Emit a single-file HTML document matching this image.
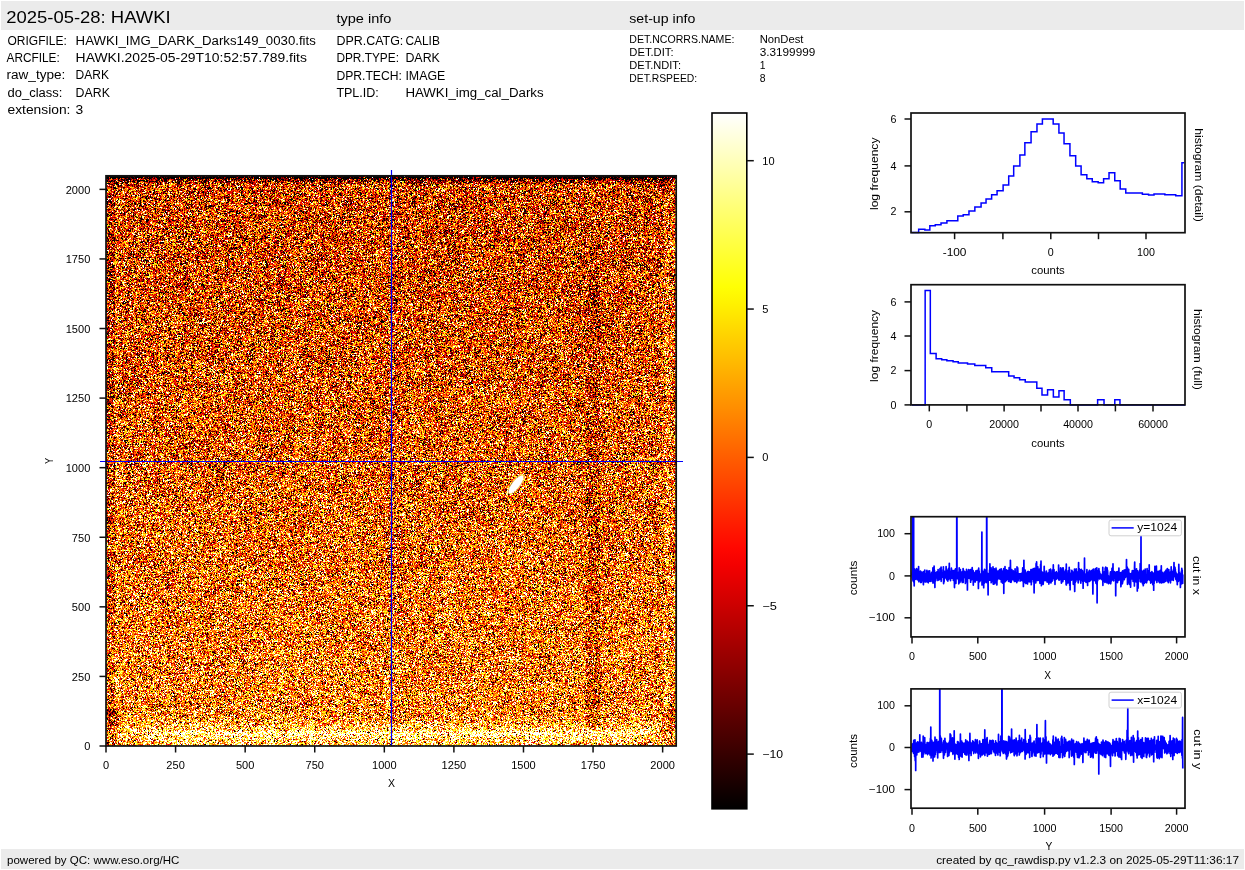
<!DOCTYPE html>
<html><head><meta charset="utf-8"><style>
html,body{margin:0;padding:0;background:#fff;width:1245px;height:870px;overflow:hidden}
#hm{position:absolute;left:106px;top:176px;width:570px;height:570px;background:#c76d29}
svg{position:absolute;left:0;top:0}
text{font-family:"Liberation Sans", sans-serif;fill:#000}
</style></head><body>
<canvas id="hm" width="570" height="570"></canvas>
<svg width="1245" height="870" viewBox="0 0 1245 870"><defs><linearGradient id="cb" x1="0" y1="0" x2="0" y2="1"><stop offset="0.000" stop-color="#ffffff"/><stop offset="0.025" stop-color="#ffffe6"/><stop offset="0.050" stop-color="#ffffcd"/><stop offset="0.075" stop-color="#ffffb4"/><stop offset="0.100" stop-color="#ffff9b"/><stop offset="0.125" stop-color="#ffff81"/><stop offset="0.150" stop-color="#ffff68"/><stop offset="0.175" stop-color="#ffff4f"/><stop offset="0.200" stop-color="#ffff36"/><stop offset="0.225" stop-color="#ffff1d"/><stop offset="0.250" stop-color="#ffff04"/><stop offset="0.275" stop-color="#fff100"/><stop offset="0.300" stop-color="#ffe000"/><stop offset="0.325" stop-color="#ffcf00"/><stop offset="0.350" stop-color="#ffbf00"/><stop offset="0.375" stop-color="#ffae00"/><stop offset="0.400" stop-color="#ff9d00"/><stop offset="0.425" stop-color="#ff8d00"/><stop offset="0.450" stop-color="#ff7c00"/><stop offset="0.475" stop-color="#ff6b00"/><stop offset="0.500" stop-color="#ff5a00"/><stop offset="0.525" stop-color="#ff4a00"/><stop offset="0.550" stop-color="#ff3900"/><stop offset="0.575" stop-color="#ff2800"/><stop offset="0.600" stop-color="#ff1700"/><stop offset="0.625" stop-color="#ff0700"/><stop offset="0.650" stop-color="#f40000"/><stop offset="0.675" stop-color="#e30000"/><stop offset="0.700" stop-color="#d20000"/><stop offset="0.725" stop-color="#c00000"/><stop offset="0.750" stop-color="#af0000"/><stop offset="0.775" stop-color="#9d0000"/><stop offset="0.800" stop-color="#8c0000"/><stop offset="0.825" stop-color="#7a0000"/><stop offset="0.850" stop-color="#690000"/><stop offset="0.875" stop-color="#570000"/><stop offset="0.900" stop-color="#460000"/><stop offset="0.925" stop-color="#340000"/><stop offset="0.950" stop-color="#230000"/><stop offset="0.975" stop-color="#110000"/><stop offset="1.000" stop-color="#000000"/></linearGradient><clipPath id="c1"><rect x="911" y="516.7" width="274" height="120.2"/></clipPath><clipPath id="c2"><rect x="911" y="688.9" width="274" height="119.3"/></clipPath></defs>
<rect x="1" y="1" width="1243" height="29" fill="#ebebeb"/>
<rect x="1" y="849" width="1243" height="20" fill="#ebebeb"/>
<text x="6.2" y="22.9" font-size="16.5" text-anchor="start" textLength="164.5" lengthAdjust="spacingAndGlyphs">2025-05-28: HAWKI</text>
<text x="336.4" y="23.3" font-size="12.3" text-anchor="start" textLength="55" lengthAdjust="spacingAndGlyphs">type info</text>
<text x="629.3" y="22.7" font-size="12.3" text-anchor="start" textLength="66" lengthAdjust="spacingAndGlyphs">set-up info</text>
<text x="7.5" y="45" font-size="12.3" text-anchor="start" textLength="59.3" lengthAdjust="spacingAndGlyphs">ORIGFILE:</text>
<text x="75.6" y="45" font-size="12.3" text-anchor="start" textLength="240.2" lengthAdjust="spacingAndGlyphs">HAWKI_IMG_DARK_Darks149_0030.fits</text>
<text x="6.5" y="62.1" font-size="12.3" text-anchor="start" textLength="53.3" lengthAdjust="spacingAndGlyphs">ARCFILE:</text>
<text x="75.6" y="62.1" font-size="12.3" text-anchor="start" textLength="231.3" lengthAdjust="spacingAndGlyphs">HAWKI.2025-05-29T10:52:57.789.fits</text>
<text x="6.5" y="79.4" font-size="12.3" text-anchor="start" textLength="58.8" lengthAdjust="spacingAndGlyphs">raw_type:</text>
<text x="75.6" y="79.4" font-size="12.3" text-anchor="start" textLength="33.4" lengthAdjust="spacingAndGlyphs">DARK</text>
<text x="7.5" y="97.0" font-size="12.3" text-anchor="start" textLength="54.8" lengthAdjust="spacingAndGlyphs">do_class:</text>
<text x="75.6" y="97.0" font-size="12.3" text-anchor="start" textLength="34.3" lengthAdjust="spacingAndGlyphs">DARK</text>
<text x="7.5" y="113.9" font-size="12.3" text-anchor="start" textLength="62.9" lengthAdjust="spacingAndGlyphs">extension:</text>
<text x="75.6" y="113.9" font-size="12.3" text-anchor="start" textLength="7.7" lengthAdjust="spacingAndGlyphs">3</text>
<text x="336.4" y="44.9" font-size="12.3" text-anchor="start" textLength="66.9" lengthAdjust="spacingAndGlyphs">DPR.CATG:</text>
<text x="405.4" y="44.9" font-size="12.3" text-anchor="start" textLength="34.5" lengthAdjust="spacingAndGlyphs">CALIB</text>
<text x="336.4" y="61.9" font-size="12.3" text-anchor="start" textLength="62.6" lengthAdjust="spacingAndGlyphs">DPR.TYPE:</text>
<text x="405.4" y="61.9" font-size="12.3" text-anchor="start" textLength="34.5" lengthAdjust="spacingAndGlyphs">DARK</text>
<text x="336.4" y="79.6" font-size="12.3" text-anchor="start" textLength="65.5" lengthAdjust="spacingAndGlyphs">DPR.TECH:</text>
<text x="405.4" y="79.6" font-size="12.3" text-anchor="start" textLength="39.9" lengthAdjust="spacingAndGlyphs">IMAGE</text>
<text x="336.4" y="96.6" font-size="12.3" text-anchor="start" textLength="42.4" lengthAdjust="spacingAndGlyphs">TPL.ID:</text>
<text x="405.4" y="96.6" font-size="12.3" text-anchor="start" textLength="138.2" lengthAdjust="spacingAndGlyphs">HAWKI_img_cal_Darks</text>
<text x="629.3" y="43.0" font-size="10.4" text-anchor="start" textLength="105.1" lengthAdjust="spacingAndGlyphs">DET.NCORRS.NAME:</text>
<text x="759.7" y="43.0" font-size="10.4" text-anchor="start" textLength="43.8" lengthAdjust="spacingAndGlyphs">NonDest</text>
<text x="629.3" y="55.6" font-size="10.4" text-anchor="start" textLength="44.3" lengthAdjust="spacingAndGlyphs">DET.DIT:</text>
<text x="759.7" y="55.6" font-size="10.4" text-anchor="start" textLength="55.6" lengthAdjust="spacingAndGlyphs">3.3199999</text>
<text x="629.3" y="68.75" font-size="10.4" text-anchor="start" textLength="51.7" lengthAdjust="spacingAndGlyphs">DET.NDIT:</text>
<text x="759.7" y="68.75" font-size="10.4" text-anchor="start">1</text>
<text x="629.3" y="81.7" font-size="10.4" text-anchor="start" textLength="67.9" lengthAdjust="spacingAndGlyphs">DET.RSPEED:</text>
<text x="759.7" y="81.7" font-size="10.4" text-anchor="start">8</text>
<text x="7" y="864" font-size="11" text-anchor="start" textLength="172.4" lengthAdjust="spacingAndGlyphs">powered by QC: www.eso.org/HC</text>
<text x="1239" y="864" font-size="11" text-anchor="end" textLength="302.8" lengthAdjust="spacingAndGlyphs">created by qc_rawdisp.py v1.2.3 on 2025-05-29T11:36:17</text>
<line x1="106.0" y1="746" x2="106.0" y2="752.5" stroke="#111" stroke-width="1.5"/>
<text x="106.0" y="768.9" font-size="10.5" text-anchor="middle" textLength="6.15" lengthAdjust="spacingAndGlyphs">0</text>
<line x1="99.5" y1="746.0" x2="106" y2="746.0" stroke="#111" stroke-width="1.5"/>
<text x="90.3" y="750.3" font-size="10.5" text-anchor="end" textLength="6.15" lengthAdjust="spacingAndGlyphs">0</text>
<line x1="175.58" y1="746" x2="175.58" y2="752.5" stroke="#111" stroke-width="1.5"/>
<text x="175.58" y="768.9" font-size="10.5" text-anchor="middle" textLength="18.45" lengthAdjust="spacingAndGlyphs">250</text>
<line x1="99.5" y1="676.42" x2="106" y2="676.42" stroke="#111" stroke-width="1.5"/>
<text x="90.3" y="680.72" font-size="10.5" text-anchor="end" textLength="18.45" lengthAdjust="spacingAndGlyphs">250</text>
<line x1="245.16" y1="746" x2="245.16" y2="752.5" stroke="#111" stroke-width="1.5"/>
<text x="245.16" y="768.9" font-size="10.5" text-anchor="middle" textLength="18.45" lengthAdjust="spacingAndGlyphs">500</text>
<line x1="99.5" y1="606.84" x2="106" y2="606.84" stroke="#111" stroke-width="1.5"/>
<text x="90.3" y="611.14" font-size="10.5" text-anchor="end" textLength="18.45" lengthAdjust="spacingAndGlyphs">500</text>
<line x1="314.74" y1="746" x2="314.74" y2="752.5" stroke="#111" stroke-width="1.5"/>
<text x="314.74" y="768.9" font-size="10.5" text-anchor="middle" textLength="18.45" lengthAdjust="spacingAndGlyphs">750</text>
<line x1="99.5" y1="537.26" x2="106" y2="537.26" stroke="#111" stroke-width="1.5"/>
<text x="90.3" y="541.56" font-size="10.5" text-anchor="end" textLength="18.45" lengthAdjust="spacingAndGlyphs">750</text>
<line x1="384.32" y1="746" x2="384.32" y2="752.5" stroke="#111" stroke-width="1.5"/>
<text x="384.32" y="768.9" font-size="10.5" text-anchor="middle" textLength="24.6" lengthAdjust="spacingAndGlyphs">1000</text>
<line x1="99.5" y1="467.68" x2="106" y2="467.68" stroke="#111" stroke-width="1.5"/>
<text x="90.3" y="471.98" font-size="10.5" text-anchor="end" textLength="24.6" lengthAdjust="spacingAndGlyphs">1000</text>
<line x1="453.9" y1="746" x2="453.9" y2="752.5" stroke="#111" stroke-width="1.5"/>
<text x="453.9" y="768.9" font-size="10.5" text-anchor="middle" textLength="24.6" lengthAdjust="spacingAndGlyphs">1250</text>
<line x1="99.5" y1="398.1" x2="106" y2="398.1" stroke="#111" stroke-width="1.5"/>
<text x="90.3" y="402.4" font-size="10.5" text-anchor="end" textLength="24.6" lengthAdjust="spacingAndGlyphs">1250</text>
<line x1="523.48" y1="746" x2="523.48" y2="752.5" stroke="#111" stroke-width="1.5"/>
<text x="523.48" y="768.9" font-size="10.5" text-anchor="middle" textLength="24.6" lengthAdjust="spacingAndGlyphs">1500</text>
<line x1="99.5" y1="328.52" x2="106" y2="328.52" stroke="#111" stroke-width="1.5"/>
<text x="90.3" y="332.82" font-size="10.5" text-anchor="end" textLength="24.6" lengthAdjust="spacingAndGlyphs">1500</text>
<line x1="593.06" y1="746" x2="593.06" y2="752.5" stroke="#111" stroke-width="1.5"/>
<text x="593.06" y="768.9" font-size="10.5" text-anchor="middle" textLength="24.6" lengthAdjust="spacingAndGlyphs">1750</text>
<line x1="99.5" y1="258.94" x2="106" y2="258.94" stroke="#111" stroke-width="1.5"/>
<text x="90.3" y="263.24" font-size="10.5" text-anchor="end" textLength="24.6" lengthAdjust="spacingAndGlyphs">1750</text>
<line x1="662.64" y1="746" x2="662.64" y2="752.5" stroke="#111" stroke-width="1.5"/>
<text x="662.64" y="768.9" font-size="10.5" text-anchor="middle" textLength="24.6" lengthAdjust="spacingAndGlyphs">2000</text>
<line x1="99.5" y1="189.36" x2="106" y2="189.36" stroke="#111" stroke-width="1.5"/>
<text x="90.3" y="193.66" font-size="10.5" text-anchor="end" textLength="24.6" lengthAdjust="spacingAndGlyphs">2000</text>
<text x="391.5" y="786.8" font-size="10.5" text-anchor="middle">X</text>
<text transform="translate(53,461) rotate(-90)" font-size="10.5" text-anchor="middle" textLength="6.2" lengthAdjust="spacingAndGlyphs">Y</text>
<line x1="391.5" y1="170" x2="391.5" y2="746" stroke="#0000ff" stroke-width="1.2"/>
<line x1="100" y1="461.5" x2="683" y2="461.5" stroke="#0000ff" stroke-width="1.2"/>
<rect x="106" y="175.8" width="570.2" height="570.2" fill="none" stroke="#111" stroke-width="1.7"/>
<rect x="712" y="113" width="34.8" height="695.8" fill="url(#cb)" stroke="#000" stroke-width="1.6"/>
<line x1="746.8" y1="160.7" x2="753.8" y2="160.7" stroke="#111" stroke-width="1.5"/>
<text x="762.3" y="164.5" font-size="10.5" text-anchor="start" textLength="12.3" lengthAdjust="spacingAndGlyphs">10</text>
<line x1="746.8" y1="309.05" x2="753.8" y2="309.05" stroke="#111" stroke-width="1.5"/>
<text x="762.3" y="312.85" font-size="10.5" text-anchor="start" textLength="6.15" lengthAdjust="spacingAndGlyphs">5</text>
<line x1="746.8" y1="457.4" x2="753.8" y2="457.4" stroke="#111" stroke-width="1.5"/>
<text x="762.3" y="461.2" font-size="10.5" text-anchor="start" textLength="6.15" lengthAdjust="spacingAndGlyphs">0</text>
<line x1="746.8" y1="605.75" x2="753.8" y2="605.75" stroke="#111" stroke-width="1.5"/>
<text x="762.3" y="609.55" font-size="10.5" text-anchor="start" textLength="14.6" lengthAdjust="spacingAndGlyphs">−5</text>
<line x1="746.8" y1="754.1" x2="753.8" y2="754.1" stroke="#111" stroke-width="1.5"/>
<text x="762.3" y="757.9" font-size="10.5" text-anchor="start" textLength="20.75" lengthAdjust="spacingAndGlyphs">−10</text>
<polyline points="911.21,232.62 918.66,232.62 918.66,229.2 924.87,229.2 924.87,229.98 929.84,229.98 929.84,225.79 935.27,225.79 935.27,224.86 941.02,224.86 941.02,222.99 946.92,222.99 946.92,220.67 957.79,220.67 957.79,216.01 963.22,216.01 963.22,214.77 968.97,214.77 968.97,211.04 974.86,211.04 974.86,207.0 981.08,207.0 981.08,203.12 986.04,203.12 986.04,198.93 991.63,198.93 991.63,194.74 997.07,194.74 997.07,190.7 1003.12,190.7 1003.12,184.96 1008.71,184.96 1008.71,175.95 1013.68,175.95 1013.68,166.02 1019.89,166.02 1019.89,154.99 1024.86,154.99 1024.86,142.73 1031.07,142.73 1031.07,131.86 1036.97,131.86 1036.97,123.94 1042.4,123.94 1042.4,118.97 1053.18,118.96 1053.18,123.92 1058.92,123.92 1058.92,132.92 1064.04,132.92 1064.04,143.78 1069.94,143.78 1069.94,155.72 1075.68,155.72 1075.68,165.96 1081.1,165.96 1081.1,174.8 1086.84,174.8 1086.84,178.68 1092.27,178.68 1092.27,181.78 1098.17,181.78 1098.17,182.87 1103.6,182.87 1103.6,178.68 1109.02,178.68 1109.02,172.78 1114.76,172.78 1114.76,180.69 1120.19,180.69 1120.19,189.07 1125.78,189.07 1125.78,192.95 1142.37,192.95 1142.37,194.19 1148.58,194.19 1148.58,194.96 1154.01,194.96 1154.01,193.88 1164.86,193.88 1164.86,194.65 1175.72,194.65 1175.72,195.74 1181.93,195.74 1181.93,162.7 1184.25,162.7" fill="none" stroke="#0000ff" stroke-width="1.5" stroke-linejoin="miter"/>
<rect x="911" y="113" width="274" height="119.7" fill="none" stroke="#111" stroke-width="1.7"/>
<line x1="904.5" y1="119" x2="911" y2="119" stroke="#111" stroke-width="1.5"/>
<text x="896.5" y="122.6" font-size="10.2" text-anchor="end" textLength="5.95" lengthAdjust="spacingAndGlyphs">6</text>
<line x1="904.5" y1="165.9" x2="911" y2="165.9" stroke="#111" stroke-width="1.5"/>
<text x="896.5" y="169.5" font-size="10.2" text-anchor="end" textLength="5.95" lengthAdjust="spacingAndGlyphs">4</text>
<line x1="904.5" y1="211.8" x2="911" y2="211.8" stroke="#111" stroke-width="1.5"/>
<text x="896.5" y="215.4" font-size="10.2" text-anchor="end" textLength="5.95" lengthAdjust="spacingAndGlyphs">2</text>
<line x1="954.6" y1="232.7" x2="954.6" y2="239.2" stroke="#111" stroke-width="1.5"/>
<text x="954.6" y="255.6" font-size="10.2" text-anchor="middle" textLength="23.8" lengthAdjust="spacingAndGlyphs">-100</text>
<line x1="1002.9" y1="232.7" x2="1002.9" y2="239.2" stroke="#111" stroke-width="1.5"/>
<line x1="1050.8" y1="232.7" x2="1050.8" y2="239.2" stroke="#111" stroke-width="1.5"/>
<text x="1050.8" y="255.6" font-size="10.2" text-anchor="middle" textLength="5.95" lengthAdjust="spacingAndGlyphs">0</text>
<line x1="1098.5" y1="232.7" x2="1098.5" y2="239.2" stroke="#111" stroke-width="1.5"/>
<line x1="1146" y1="232.7" x2="1146" y2="239.2" stroke="#111" stroke-width="1.5"/>
<text x="1146" y="255.6" font-size="10.2" text-anchor="middle" textLength="17.85" lengthAdjust="spacingAndGlyphs">100</text>
<text x="1048" y="274.2" font-size="10.2" text-anchor="middle" textLength="33.5" lengthAdjust="spacingAndGlyphs">counts</text>
<text transform="translate(877.5,173.8) rotate(-90)" font-size="10.2" text-anchor="middle" textLength="72.5" lengthAdjust="spacingAndGlyphs">log frequency</text>
<text transform="translate(1194.6,175) rotate(90)" font-size="10.2" text-anchor="middle" textLength="93.5" lengthAdjust="spacingAndGlyphs">histogram (detail)</text>
<polyline points="911.71,404.89 925.15,404.89 925.15,290.51 930.32,290.51 930.32,353.59 936.11,353.59 936.11,358.76 941.7,358.76 941.7,359.8 946.87,359.8 946.87,360.83 953.07,360.83 953.07,361.87 958.24,361.87 958.24,362.9 967.55,362.9 967.55,363.93 974.79,363.93 974.79,365.59 985.75,365.59 985.75,367.66 991.75,367.66 991.75,371.79 1008.69,371.79 1008.69,375.93 1014.06,375.93 1014.06,377.79 1019.65,377.79 1019.65,379.86 1025.23,379.86 1025.23,381.93 1036.81,381.93 1036.81,388.13 1041.99,388.13 1041.99,394.96 1047.57,394.96 1047.57,389.79 1053.36,389.79 1053.36,397.03 1058.95,397.03 1058.95,390.82 1064.12,390.82 1064.12,399.72 1070.32,399.72 1070.32,404.89 1097.62,404.89 1097.62,399.72 1104.03,399.72 1104.03,404.89 1114.79,404.89 1114.79,399.72 1119.96,399.72 1119.96,404.89 1185.11,404.89" fill="none" stroke="#0000ff" stroke-width="1.5"/>
<rect x="911" y="284.7" width="274" height="120.2" fill="none" stroke="#111" stroke-width="1.7"/>
<line x1="904.5" y1="301.9" x2="911" y2="301.9" stroke="#111" stroke-width="1.5"/>
<text x="896.5" y="305.5" font-size="10.2" text-anchor="end" textLength="5.95" lengthAdjust="spacingAndGlyphs">6</text>
<line x1="904.5" y1="336" x2="911" y2="336" stroke="#111" stroke-width="1.5"/>
<text x="896.5" y="339.6" font-size="10.2" text-anchor="end" textLength="5.95" lengthAdjust="spacingAndGlyphs">4</text>
<line x1="904.5" y1="370.6" x2="911" y2="370.6" stroke="#111" stroke-width="1.5"/>
<text x="896.5" y="374.2" font-size="10.2" text-anchor="end" textLength="5.95" lengthAdjust="spacingAndGlyphs">2</text>
<line x1="904.5" y1="404.9" x2="911" y2="404.9" stroke="#111" stroke-width="1.5"/>
<text x="896.5" y="408.5" font-size="10.2" text-anchor="end" textLength="5.95" lengthAdjust="spacingAndGlyphs">0</text>
<line x1="929.3" y1="404.9" x2="929.3" y2="411.4" stroke="#111" stroke-width="1.5"/>
<text x="929.3" y="428" font-size="10.2" text-anchor="middle" textLength="5.95" lengthAdjust="spacingAndGlyphs">0</text>
<line x1="966.9" y1="404.9" x2="966.9" y2="411.4" stroke="#111" stroke-width="1.5"/>
<line x1="1004.1" y1="404.9" x2="1004.1" y2="411.4" stroke="#111" stroke-width="1.5"/>
<text x="1004.1" y="428" font-size="10.2" text-anchor="middle" textLength="29.75" lengthAdjust="spacingAndGlyphs">20000</text>
<line x1="1041" y1="404.9" x2="1041" y2="411.4" stroke="#111" stroke-width="1.5"/>
<line x1="1078" y1="404.9" x2="1078" y2="411.4" stroke="#111" stroke-width="1.5"/>
<text x="1078" y="428" font-size="10.2" text-anchor="middle" textLength="29.75" lengthAdjust="spacingAndGlyphs">40000</text>
<line x1="1115.4" y1="404.9" x2="1115.4" y2="411.4" stroke="#111" stroke-width="1.5"/>
<line x1="1153" y1="404.9" x2="1153" y2="411.4" stroke="#111" stroke-width="1.5"/>
<text x="1153" y="428" font-size="10.2" text-anchor="middle" textLength="29.75" lengthAdjust="spacingAndGlyphs">60000</text>
<text x="1048" y="446.7" font-size="10.2" text-anchor="middle" textLength="33.5" lengthAdjust="spacingAndGlyphs">counts</text>
<text transform="translate(877.5,345.9) rotate(-90)" font-size="10.2" text-anchor="middle" textLength="72" lengthAdjust="spacingAndGlyphs">log frequency</text>
<text transform="translate(1194.3,349.4) rotate(90)" font-size="10.2" text-anchor="middle" textLength="81" lengthAdjust="spacingAndGlyphs">histogram (full)</text>
<polyline clip-path="url(#c1)" points="912.0,574.6 912.1,575.2 912.3,571.9 912.4,577.7 912.5,572.2 912.7,407.5 912.8,580.0 912.9,573.4 913.1,571.4 913.2,573.0 913.3,581.2 913.5,578.0 913.6,407.5 913.7,575.0 913.9,575.0 914.0,582.7 914.1,572.7 914.2,585.8 914.4,570.5 914.5,575.4 914.6,569.0 914.8,572.3 914.9,577.5 915.0,574.5 915.2,571.3 915.3,574.1 915.4,576.4 915.6,576.8 915.7,579.3 915.8,575.2 916.0,578.3 916.1,574.2 916.2,569.9 916.4,572.5 916.5,578.9 916.6,568.5 916.8,572.9 916.9,576.2 917.0,578.7 917.2,574.5 917.3,569.3 917.4,579.7 917.6,569.7 917.7,570.3 917.8,577.2 918.0,574.5 918.1,574.8 918.2,571.7 918.4,569.4 918.5,580.4 918.6,566.5 918.7,574.9 918.9,581.8 919.0,574.1 919.1,576.3 919.3,577.8 919.4,579.5 919.5,573.2 919.7,572.8 919.8,579.8 919.9,571.3 920.1,571.5 920.2,576.5 920.3,575.3 920.5,571.1 920.6,575.4 920.7,582.4 920.9,573.0 921.0,575.5 921.1,578.3 921.3,578.8 921.4,582.3 921.5,573.2 921.7,576.8 921.8,572.1 921.9,573.2 922.1,579.0 922.2,580.7 922.3,578.9 922.5,576.6 922.6,576.6 922.7,577.3 922.8,575.6 923.0,574.6 923.1,574.8 923.2,574.0 923.4,584.7 923.5,571.6 923.6,575.3 923.8,572.8 923.9,579.9 924.0,579.4 924.2,576.5 924.3,577.6 924.4,581.6 924.6,579.2 924.7,577.3 924.8,570.0 925.0,580.6 925.1,581.9 925.2,577.4 925.4,579.7 925.5,573.6 925.6,579.1 925.8,574.9 925.9,575.2 926.0,581.8 926.2,579.2 926.3,574.5 926.4,579.1 926.6,579.0 926.7,579.1 926.8,571.5 926.9,570.4 927.1,578.8 927.2,581.9 927.3,577.3 927.5,581.0 927.6,577.7 927.7,571.7 927.9,572.3 928.0,573.9 928.1,576.3 928.3,582.8 928.4,577.7 928.5,571.2 928.7,572.8 928.8,578.9 928.9,574.4 929.1,575.6 929.2,577.4 929.3,581.1 929.5,581.2 929.6,570.8 929.7,578.7 929.9,578.0 930.0,578.0 930.1,579.6 930.3,580.1 930.4,573.8 930.5,576.2 930.7,581.5 930.8,576.6 930.9,578.7 931.1,575.7 931.2,577.0 931.3,574.1 931.4,576.7 931.6,572.4 931.7,579.3 931.8,576.5 932.0,575.4 932.1,572.1 932.2,574.5 932.4,576.0 932.5,581.5 932.6,578.8 932.8,576.5 932.9,567.9 933.0,583.1 933.2,580.8 933.3,582.4 933.4,577.5 933.6,575.9 933.7,580.2 933.8,577.9 934.0,580.2 934.1,566.0 934.2,582.5 934.4,575.5 934.5,570.4 934.6,573.8 934.8,580.4 934.9,587.4 935.0,575.7 935.2,576.2 935.3,574.0 935.4,581.2 935.5,577.5 935.7,578.3 935.8,580.3 935.9,579.3 936.1,572.7 936.2,577.4 936.3,576.5 936.5,578.0 936.6,576.2 936.7,577.9 936.9,576.3 937.0,571.8 937.1,574.1 937.3,572.3 937.4,574.5 937.5,572.3 937.7,575.4 937.8,573.4 937.9,580.4 938.1,569.5 938.2,578.3 938.3,572.7 938.5,574.5 938.6,579.9 938.7,576.5 938.9,577.3 939.0,578.3 939.1,578.7 939.3,573.4 939.4,579.7 939.5,577.8 939.7,578.9 939.8,577.3 939.9,571.5 940.0,568.7 940.2,570.7 940.3,576.2 940.4,572.7 940.6,572.2 940.7,576.1 940.8,578.9 941.0,570.6 941.1,567.0 941.2,581.3 941.4,576.5 941.5,572.6 941.6,577.4 941.8,576.8 941.9,573.5 942.0,577.2 942.2,576.3 942.3,575.7 942.4,576.2 942.6,573.1 942.7,574.2 942.8,575.9 943.0,569.9 943.1,572.2 943.2,575.9 943.4,566.8 943.5,575.2 943.6,583.6 943.8,580.4 943.9,582.1 944.0,576.6 944.1,581.9 944.3,574.3 944.4,575.4 944.5,571.4 944.7,575.4 944.8,571.5 944.9,573.9 945.1,576.4 945.2,574.7 945.3,577.4 945.5,575.7 945.6,577.0 945.7,578.0 945.9,572.1 946.0,571.0 946.1,566.5 946.3,578.6 946.4,576.9 946.5,574.8 946.7,579.5 946.8,576.5 946.9,576.1 947.1,580.1 947.2,575.2 947.3,574.6 947.5,570.7 947.6,575.6 947.7,579.0 947.9,581.1 948.0,573.9 948.1,569.0 948.3,579.4 948.4,573.3 948.5,572.2 948.6,575.8 948.8,572.2 948.9,568.1 949.0,571.5 949.2,574.8 949.3,563.3 949.4,573.6 949.6,578.3 949.7,576.8 949.8,574.9 950.0,579.1 950.1,575.1 950.2,572.9 950.4,577.3 950.5,580.7 950.6,572.4 950.8,572.0 950.9,571.2 951.0,578.6 951.2,577.5 951.3,571.1 951.4,568.2 951.6,575.5 951.7,578.0 951.8,578.1 952.0,572.4 952.1,574.1 952.2,577.9 952.4,577.6 952.5,576.9 952.6,570.6 952.7,573.2 952.9,576.7 953.0,578.4 953.1,573.6 953.3,580.3 953.4,576.4 953.5,573.3 953.7,574.2 953.8,575.4 953.9,573.7 954.1,573.1 954.2,570.3 954.3,578.4 954.5,587.6 954.6,571.6 954.7,572.5 954.9,576.2 955.0,572.8 955.1,571.0 955.3,580.5 955.4,575.6 955.5,568.8 955.7,579.5 955.8,572.2 955.9,583.5 956.1,570.2 956.2,576.5 956.3,577.8 956.5,573.0 956.6,576.8 956.7,578.6 956.8,407.5 957.0,567.4 957.1,573.3 957.2,574.9 957.4,574.4 957.5,572.5 957.6,573.0 957.8,576.4 957.9,574.2 958.0,577.8 958.2,577.7 958.3,579.7 958.4,572.5 958.6,577.0 958.7,572.2 958.8,583.8 959.0,577.2 959.1,574.8 959.2,567.9 959.4,577.4 959.5,576.9 959.6,572.2 959.8,573.1 959.9,581.2 960.0,582.3 960.2,572.4 960.3,578.3 960.4,569.6 960.6,580.5 960.7,575.6 960.8,576.8 961.0,576.1 961.1,577.4 961.2,573.8 961.3,577.1 961.5,577.2 961.6,581.0 961.7,575.9 961.9,577.1 962.0,578.1 962.1,571.8 962.3,582.4 962.4,575.7 962.5,575.9 962.7,580.8 962.8,580.7 962.9,578.7 963.1,568.5 963.2,582.3 963.3,569.6 963.5,571.1 963.6,570.9 963.7,578.0 963.9,570.9 964.0,577.1 964.1,573.9 964.3,574.6 964.4,575.9 964.5,576.8 964.7,577.0 964.8,571.9 964.9,572.7 965.1,578.1 965.2,576.4 965.3,576.9 965.4,583.4 965.6,572.0 965.7,571.8 965.8,579.0 966.0,580.1 966.1,576.6 966.2,573.8 966.4,578.3 966.5,569.4 966.6,574.1 966.8,576.3 966.9,572.8 967.0,581.9 967.2,575.4 967.3,571.7 967.4,590.0 967.6,571.7 967.7,577.3 967.8,575.2 968.0,574.0 968.1,575.7 968.2,573.1 968.4,578.1 968.5,577.2 968.6,569.5 968.8,570.6 968.9,572.2 969.0,575.3 969.2,578.5 969.3,570.4 969.4,570.1 969.6,577.7 969.7,576.8 969.8,574.8 969.9,571.8 970.1,572.4 970.2,570.7 970.3,573.6 970.5,571.4 970.6,582.2 970.7,569.5 970.9,575.5 971.0,580.8 971.1,578.2 971.3,573.9 971.4,572.0 971.5,569.4 971.7,578.4 971.8,576.8 971.9,572.2 972.1,572.0 972.2,567.6 972.3,573.0 972.5,575.4 972.6,573.9 972.7,579.6 972.9,578.6 973.0,572.9 973.1,570.5 973.3,585.1 973.4,571.6 973.5,577.5 973.7,580.8 973.8,572.7 973.9,576.3 974.0,575.4 974.2,573.3 974.3,575.8 974.4,577.0 974.6,576.5 974.7,579.1 974.8,573.2 975.0,582.1 975.1,573.5 975.2,582.1 975.4,572.4 975.5,575.7 975.6,579.7 975.8,579.7 975.9,570.9 976.0,574.3 976.2,575.2 976.3,576.0 976.4,575.0 976.6,573.6 976.7,578.5 976.8,580.3 977.0,572.4 977.1,578.1 977.2,570.4 977.4,575.8 977.5,575.2 977.6,578.0 977.8,575.6 977.9,575.5 978.0,574.5 978.1,574.9 978.3,579.4 978.4,588.5 978.5,578.4 978.7,568.2 978.8,573.4 978.9,574.3 979.1,573.4 979.2,571.2 979.3,578.5 979.5,574.9 979.6,574.3 979.7,575.0 979.9,581.6 980.0,576.0 980.1,576.1 980.3,580.4 980.4,579.0 980.5,574.0 980.7,579.9 980.8,576.8 980.9,575.9 981.1,573.6 981.2,576.8 981.3,579.1 981.5,579.2 981.6,569.6 981.7,577.2 981.9,532.1 982.0,584.9 982.1,573.4 982.3,572.2 982.4,578.6 982.5,581.2 982.6,576.6 982.8,581.3 982.9,579.9 983.0,571.3 983.2,576.5 983.3,574.9 983.4,577.4 983.6,576.6 983.7,587.7 983.8,577.7 984.0,576.2 984.1,583.7 984.2,580.8 984.4,573.2 984.5,569.4 984.6,578.1 984.8,571.1 984.9,578.8 985.0,569.8 985.2,581.3 985.3,578.6 985.4,575.9 985.6,581.7 985.7,572.9 985.8,581.9 986.0,576.6 986.1,580.5 986.2,582.7 986.4,578.3 986.5,577.1 986.6,577.8 986.7,407.5 986.9,577.8 987.0,578.4 987.1,577.8 987.3,578.9 987.4,579.8 987.5,573.0 987.7,575.8 987.8,573.9 987.9,578.0 988.1,594.8 988.2,577.5 988.3,576.9 988.5,577.6 988.6,575.7 988.7,573.5 988.9,579.6 989.0,579.7 989.1,574.4 989.3,580.0 989.4,580.1 989.5,570.2 989.7,578.2 989.8,577.8 989.9,563.8 990.1,573.0 990.2,574.3 990.3,580.2 990.5,573.0 990.6,573.3 990.7,573.6 990.9,580.0 991.0,573.4 991.1,567.9 991.2,582.7 991.4,575.0 991.5,576.0 991.6,571.4 991.8,576.6 991.9,576.1 992.0,570.5 992.2,579.6 992.3,569.9 992.4,571.1 992.6,581.4 992.7,576.3 992.8,573.2 993.0,566.9 993.1,573.8 993.2,584.0 993.4,576.1 993.5,578.0 993.6,568.9 993.8,584.2 993.9,577.9 994.0,578.5 994.2,578.3 994.3,568.8 994.4,580.3 994.6,575.3 994.7,577.3 994.8,582.8 995.0,583.6 995.1,579.3 995.2,577.4 995.3,577.4 995.5,575.5 995.6,575.6 995.7,582.2 995.9,576.7 996.0,568.2 996.1,578.2 996.3,576.0 996.4,570.1 996.5,574.3 996.7,577.6 996.8,574.7 996.9,584.9 997.1,571.9 997.2,578.6 997.3,574.2 997.5,576.4 997.6,579.8 997.7,573.7 997.9,576.2 998.0,571.0 998.1,576.5 998.3,574.7 998.4,571.0 998.5,574.9 998.7,576.9 998.8,570.8 998.9,573.3 999.1,577.8 999.2,578.7 999.3,577.8 999.5,570.5 999.6,569.5 999.7,574.3 999.8,571.6 1000.0,579.2 1000.1,578.0 1000.2,569.5 1000.4,571.6 1000.5,579.2 1000.6,569.9 1000.8,570.6 1000.9,574.5 1001.0,571.2 1001.2,568.8 1001.3,582.0 1001.4,577.6 1001.6,571.0 1001.7,576.2 1001.8,573.6 1002.0,572.5 1002.1,576.2 1002.2,581.4 1002.4,577.5 1002.5,583.1 1002.6,574.7 1002.8,571.0 1002.9,575.1 1003.0,577.6 1003.2,573.8 1003.3,570.1 1003.4,572.1 1003.6,576.5 1003.7,568.7 1003.8,593.3 1003.9,578.9 1004.1,577.7 1004.2,574.3 1004.3,578.6 1004.5,579.8 1004.6,580.8 1004.7,577.9 1004.9,579.0 1005.0,566.7 1005.1,581.8 1005.3,575.7 1005.4,579.5 1005.5,573.6 1005.7,575.6 1005.8,571.5 1005.9,581.0 1006.1,576.0 1006.2,573.3 1006.3,579.2 1006.5,569.8 1006.6,580.2 1006.7,578.2 1006.9,574.7 1007.0,576.5 1007.1,577.7 1007.3,576.5 1007.4,574.4 1007.5,577.2 1007.7,579.1 1007.8,570.6 1007.9,575.3 1008.0,578.5 1008.2,572.2 1008.3,574.3 1008.4,575.2 1008.6,581.4 1008.7,576.0 1008.8,577.3 1009.0,574.7 1009.1,567.7 1009.2,574.4 1009.4,573.9 1009.5,579.7 1009.6,572.5 1009.8,574.3 1009.9,574.3 1010.0,573.3 1010.2,573.0 1010.3,582.1 1010.4,560.3 1010.6,573.4 1010.7,572.3 1010.8,578.7 1011.0,573.5 1011.1,582.3 1011.2,573.3 1011.4,570.0 1011.5,574.2 1011.6,580.8 1011.8,569.6 1011.9,579.8 1012.0,576.5 1012.2,579.0 1012.3,577.4 1012.4,579.3 1012.5,579.2 1012.7,575.0 1012.8,574.0 1012.9,572.6 1013.1,576.2 1013.2,570.8 1013.3,570.9 1013.5,579.7 1013.6,579.8 1013.7,575.6 1013.9,578.8 1014.0,575.8 1014.1,576.3 1014.3,572.2 1014.4,581.5 1014.5,578.0 1014.7,578.8 1014.8,575.4 1014.9,575.9 1015.1,568.8 1015.2,576.7 1015.3,581.3 1015.5,577.8 1015.6,572.9 1015.7,574.8 1015.9,580.5 1016.0,577.6 1016.1,576.9 1016.3,577.7 1016.4,581.4 1016.5,576.8 1016.6,572.5 1016.8,582.7 1016.9,577.0 1017.0,566.9 1017.2,574.3 1017.3,576.5 1017.4,575.4 1017.6,578.5 1017.7,567.8 1017.8,570.3 1018.0,574.9 1018.1,580.9 1018.2,579.0 1018.4,578.3 1018.5,576.9 1018.6,575.0 1018.8,577.3 1018.9,573.9 1019.0,574.5 1019.2,573.9 1019.3,578.2 1019.4,577.9 1019.6,576.2 1019.7,577.4 1019.8,577.2 1020.0,579.5 1020.1,581.1 1020.2,575.6 1020.4,573.8 1020.5,577.5 1020.6,580.6 1020.8,580.6 1020.9,576.9 1021.0,575.2 1021.1,574.6 1021.3,577.8 1021.4,573.4 1021.5,580.5 1021.7,576.7 1021.8,579.7 1021.9,573.6 1022.1,576.9 1022.2,579.8 1022.3,578.7 1022.5,575.4 1022.6,573.0 1022.7,567.8 1022.9,580.9 1023.0,578.0 1023.1,579.2 1023.3,577.7 1023.4,586.5 1023.5,576.5 1023.7,576.0 1023.8,575.7 1023.9,560.3 1024.1,579.9 1024.2,573.3 1024.3,582.7 1024.5,570.6 1024.6,579.8 1024.7,580.0 1024.9,577.6 1025.0,577.5 1025.1,582.5 1025.2,570.2 1025.4,572.7 1025.5,579.2 1025.6,578.0 1025.8,575.4 1025.9,583.5 1026.0,573.4 1026.2,576.2 1026.3,574.1 1026.4,577.8 1026.6,575.5 1026.7,579.5 1026.8,577.4 1027.0,578.5 1027.1,579.8 1027.2,572.3 1027.4,574.2 1027.5,583.9 1027.6,571.6 1027.8,577.5 1027.9,573.9 1028.0,579.0 1028.2,579.4 1028.3,578.8 1028.4,571.6 1028.6,574.2 1028.7,575.9 1028.8,571.7 1029.0,574.1 1029.1,579.1 1029.2,582.0 1029.4,576.3 1029.5,574.2 1029.6,577.3 1029.7,577.1 1029.9,581.2 1030.0,571.9 1030.1,580.0 1030.3,580.2 1030.4,581.4 1030.5,574.9 1030.7,573.1 1030.8,582.0 1030.9,569.7 1031.1,582.2 1031.2,575.9 1031.3,584.7 1031.5,578.0 1031.6,577.4 1031.7,569.6 1031.9,576.6 1032.0,576.3 1032.1,577.9 1032.3,577.9 1032.4,579.2 1032.5,574.9 1032.7,572.6 1032.8,572.5 1032.9,576.3 1033.1,575.2 1033.2,568.5 1033.3,573.4 1033.5,582.1 1033.6,576.1 1033.7,570.7 1033.8,573.1 1034.0,575.2 1034.1,592.8 1034.2,577.9 1034.4,570.4 1034.5,576.4 1034.6,568.4 1034.8,575.7 1034.9,569.6 1035.0,577.2 1035.2,572.6 1035.3,574.9 1035.4,570.7 1035.6,577.5 1035.7,574.4 1035.8,582.9 1036.0,576.3 1036.1,563.7 1036.2,572.4 1036.4,580.7 1036.5,577.7 1036.6,561.9 1036.8,575.7 1036.9,580.5 1037.0,575.8 1037.2,574.5 1037.3,578.0 1037.4,577.1 1037.6,578.3 1037.7,576.3 1037.8,566.8 1037.9,580.1 1038.1,573.9 1038.2,580.4 1038.3,573.2 1038.5,576.1 1038.6,574.1 1038.7,572.4 1038.9,570.3 1039.0,579.8 1039.1,572.4 1039.3,569.2 1039.4,574.4 1039.5,578.3 1039.7,571.5 1039.8,578.7 1039.9,583.3 1040.1,576.4 1040.2,573.3 1040.3,581.1 1040.5,575.9 1040.6,564.4 1040.7,573.4 1040.9,575.2 1041.0,561.2 1041.1,573.9 1041.3,574.7 1041.4,585.7 1041.5,581.0 1041.7,576.6 1041.8,574.8 1041.9,572.0 1042.1,578.0 1042.2,577.5 1042.3,572.7 1042.4,575.0 1042.6,572.3 1042.7,574.5 1042.8,583.9 1043.0,580.0 1043.1,576.7 1043.2,584.3 1043.4,579.9 1043.5,574.4 1043.6,581.1 1043.8,577.6 1043.9,575.2 1044.0,580.3 1044.2,566.3 1044.3,575.6 1044.4,574.7 1044.6,580.4 1044.7,573.1 1044.8,576.0 1045.0,576.4 1045.1,580.5 1045.2,578.8 1045.4,577.3 1045.5,574.7 1045.6,575.8 1045.8,575.2 1045.9,575.6 1046.0,576.2 1046.2,571.4 1046.3,580.7 1046.4,571.0 1046.5,577.5 1046.7,572.7 1046.8,578.5 1046.9,574.3 1047.1,579.8 1047.2,582.2 1047.3,575.2 1047.5,580.2 1047.6,573.6 1047.7,577.0 1047.9,581.1 1048.0,581.3 1048.1,576.8 1048.3,573.4 1048.4,579.0 1048.5,581.7 1048.7,579.2 1048.8,572.7 1048.9,584.1 1049.1,574.7 1049.2,582.2 1049.3,569.8 1049.5,578.5 1049.6,573.0 1049.7,577.4 1049.9,577.3 1050.0,570.2 1050.1,571.9 1050.3,576.5 1050.4,582.2 1050.5,569.1 1050.7,571.1 1050.8,577.4 1050.9,577.6 1051.0,582.9 1051.2,575.6 1051.3,575.0 1051.4,580.0 1051.6,577.5 1051.7,574.6 1051.8,575.8 1052.0,573.3 1052.1,581.2 1052.2,575.8 1052.4,576.4 1052.5,569.9 1052.6,577.1 1052.8,578.1 1052.9,575.0 1053.0,577.0 1053.2,574.7 1053.3,564.9 1053.4,577.7 1053.6,573.7 1053.7,572.3 1053.8,574.6 1054.0,569.5 1054.1,573.8 1054.2,579.8 1054.4,580.2 1054.5,579.2 1054.6,577.0 1054.8,575.6 1054.9,576.9 1055.0,584.3 1055.1,572.9 1055.3,576.9 1055.4,574.1 1055.5,575.6 1055.7,575.4 1055.8,573.8 1055.9,575.2 1056.1,579.5 1056.2,575.2 1056.3,571.6 1056.5,574.0 1056.6,574.1 1056.7,577.3 1056.9,577.0 1057.0,578.6 1057.1,572.9 1057.3,577.7 1057.4,574.6 1057.5,573.5 1057.7,574.5 1057.8,573.0 1057.9,575.1 1058.1,575.6 1058.2,574.7 1058.3,575.1 1058.5,574.5 1058.6,565.1 1058.7,579.7 1058.9,575.5 1059.0,571.6 1059.1,577.8 1059.2,580.1 1059.4,575.3 1059.5,579.9 1059.6,572.1 1059.8,574.0 1059.9,572.2 1060.0,576.3 1060.2,573.4 1060.3,571.3 1060.4,571.0 1060.6,567.9 1060.7,571.8 1060.8,569.7 1061.0,572.9 1061.1,576.6 1061.2,579.4 1061.4,583.2 1061.5,570.0 1061.6,575.9 1061.8,578.7 1061.9,576.2 1062.0,574.4 1062.2,573.1 1062.3,573.9 1062.4,568.1 1062.6,576.7 1062.7,575.4 1062.8,581.6 1063.0,577.4 1063.1,575.5 1063.2,567.8 1063.4,572.0 1063.5,570.8 1063.6,575.6 1063.7,576.7 1063.9,572.2 1064.0,579.3 1064.1,577.3 1064.3,577.6 1064.4,575.5 1064.5,579.1 1064.7,574.8 1064.8,572.6 1064.9,573.5 1065.1,577.1 1065.2,577.4 1065.3,571.1 1065.5,579.0 1065.6,569.9 1065.7,577.2 1065.9,581.5 1066.0,577.0 1066.1,584.5 1066.3,564.1 1066.4,584.9 1066.5,573.6 1066.7,573.1 1066.8,577.5 1066.9,578.5 1067.1,582.9 1067.2,574.3 1067.3,576.7 1067.5,574.2 1067.6,579.7 1067.7,573.5 1067.8,574.1 1068.0,583.1 1068.1,575.1 1068.2,570.8 1068.4,574.5 1068.5,578.6 1068.6,580.0 1068.8,578.1 1068.9,577.1 1069.0,579.5 1069.2,567.3 1069.3,574.5 1069.4,572.8 1069.6,569.5 1069.7,585.3 1069.8,578.1 1070.0,580.7 1070.1,589.7 1070.2,577.4 1070.4,577.6 1070.5,580.1 1070.6,577.2 1070.8,580.4 1070.9,576.4 1071.0,576.3 1071.2,573.2 1071.3,580.2 1071.4,574.2 1071.6,576.0 1071.7,575.1 1071.8,570.4 1072.0,576.3 1072.1,577.7 1072.2,571.0 1072.3,579.6 1072.5,578.3 1072.6,576.9 1072.7,577.3 1072.9,574.2 1073.0,574.4 1073.1,574.2 1073.3,584.3 1073.4,576.7 1073.5,574.3 1073.7,577.6 1073.8,577.8 1073.9,571.8 1074.1,576.5 1074.2,575.3 1074.3,578.7 1074.5,569.0 1074.6,585.0 1074.7,591.5 1074.9,580.8 1075.0,572.2 1075.1,571.9 1075.3,582.4 1075.4,573.7 1075.5,574.1 1075.7,579.6 1075.8,581.5 1075.9,571.3 1076.1,572.4 1076.2,568.8 1076.3,569.4 1076.4,576.9 1076.6,571.6 1076.7,577.2 1076.8,572.5 1077.0,576.4 1077.1,577.3 1077.2,579.6 1077.4,577.4 1077.5,572.6 1077.6,573.6 1077.8,578.3 1077.9,573.5 1078.0,577.1 1078.2,582.9 1078.3,581.3 1078.4,577.7 1078.6,562.5 1078.7,577.4 1078.8,577.6 1079.0,579.5 1079.1,578.2 1079.2,568.6 1079.4,578.3 1079.5,577.6 1079.6,578.1 1079.8,570.9 1079.9,576.1 1080.0,569.7 1080.2,571.2 1080.3,579.9 1080.4,580.0 1080.6,581.0 1080.7,576.3 1080.8,583.1 1080.9,581.4 1081.1,578.4 1081.2,576.3 1081.3,569.4 1081.5,580.6 1081.6,573.6 1081.7,576.0 1081.9,575.8 1082.0,573.7 1082.1,579.2 1082.3,577.4 1082.4,574.7 1082.5,570.7 1082.7,575.6 1082.8,581.6 1082.9,572.2 1083.1,588.2 1083.2,575.1 1083.3,579.1 1083.5,579.8 1083.6,579.2 1083.7,580.2 1083.9,581.3 1084.0,576.8 1084.1,576.3 1084.3,577.5 1084.4,571.9 1084.5,558.1 1084.7,580.9 1084.8,573.9 1084.9,574.4 1085.0,580.5 1085.2,578.4 1085.3,578.2 1085.4,575.0 1085.6,578.9 1085.7,575.4 1085.8,578.1 1086.0,582.4 1086.1,574.9 1086.2,577.0 1086.4,580.7 1086.5,573.5 1086.6,579.0 1086.8,580.1 1086.9,569.5 1087.0,574.9 1087.2,574.9 1087.3,575.0 1087.4,574.1 1087.6,585.4 1087.7,572.3 1087.8,576.8 1088.0,577.4 1088.1,578.1 1088.2,574.6 1088.4,573.3 1088.5,581.4 1088.6,577.5 1088.8,572.4 1088.9,580.1 1089.0,571.1 1089.1,574.1 1089.3,574.7 1089.4,577.6 1089.5,570.3 1089.7,581.3 1089.8,575.0 1089.9,574.1 1090.1,573.8 1090.2,571.8 1090.3,571.7 1090.5,579.5 1090.6,580.3 1090.7,577.8 1090.9,574.0 1091.0,575.4 1091.1,578.8 1091.3,570.8 1091.4,579.6 1091.5,576.5 1091.7,572.8 1091.8,575.4 1091.9,577.5 1092.1,575.5 1092.2,577.8 1092.3,570.0 1092.5,575.4 1092.6,575.5 1092.7,579.5 1092.9,594.0 1093.0,579.3 1093.1,581.0 1093.3,573.5 1093.4,569.0 1093.5,577.9 1093.6,571.8 1093.8,579.8 1093.9,578.7 1094.0,578.8 1094.2,578.0 1094.3,580.5 1094.4,574.2 1094.6,580.4 1094.7,579.3 1094.8,580.6 1095.0,573.3 1095.1,574.3 1095.2,569.7 1095.4,568.6 1095.5,579.0 1095.6,572.9 1095.8,577.9 1095.9,583.2 1096.0,577.3 1096.2,571.6 1096.3,577.1 1096.4,577.1 1096.6,575.1 1096.7,584.0 1096.8,567.8 1097.0,574.6 1097.1,602.8 1097.2,580.5 1097.4,578.2 1097.5,575.7 1097.6,576.6 1097.7,580.7 1097.9,573.6 1098.0,576.2 1098.1,573.6 1098.3,578.9 1098.4,577.5 1098.5,570.3 1098.7,576.8 1098.8,571.7 1098.9,568.6 1099.1,577.4 1099.2,570.9 1099.3,577.7 1099.5,575.7 1099.6,571.8 1099.7,579.0 1099.9,575.5 1100.0,577.3 1100.1,577.7 1100.3,574.8 1100.4,576.4 1100.5,575.8 1100.7,574.2 1100.8,575.9 1100.9,578.7 1101.1,578.0 1101.2,576.3 1101.3,576.8 1101.5,575.2 1101.6,578.0 1101.7,577.0 1101.9,579.7 1102.0,578.1 1102.1,576.1 1102.2,575.4 1102.4,576.1 1102.5,575.7 1102.6,576.9 1102.8,567.3 1102.9,585.3 1103.0,577.4 1103.2,579.7 1103.3,579.8 1103.4,580.6 1103.6,573.9 1103.7,574.4 1103.8,581.2 1104.0,572.8 1104.1,576.5 1104.2,577.2 1104.4,573.5 1104.5,571.6 1104.6,579.7 1104.8,578.5 1104.9,582.5 1105.0,581.3 1105.2,568.0 1105.3,576.8 1105.4,574.1 1105.6,575.0 1105.7,567.0 1105.8,574.2 1106.0,575.4 1106.1,575.4 1106.2,581.8 1106.3,579.0 1106.5,580.5 1106.6,572.3 1106.7,575.8 1106.9,578.8 1107.0,582.9 1107.1,567.9 1107.3,575.5 1107.4,577.2 1107.5,570.1 1107.7,572.5 1107.8,577.0 1107.9,576.5 1108.1,580.9 1108.2,575.6 1108.3,578.0 1108.5,577.2 1108.6,583.7 1108.7,577.8 1108.9,579.0 1109.0,577.6 1109.1,581.9 1109.3,583.0 1109.4,578.2 1109.5,576.2 1109.7,576.2 1109.8,576.5 1109.9,579.8 1110.1,578.7 1110.2,574.8 1110.3,573.3 1110.5,571.9 1110.6,579.6 1110.7,583.8 1110.8,582.6 1111.0,574.5 1111.1,575.0 1111.2,579.8 1111.4,581.1 1111.5,575.6 1111.6,572.8 1111.8,576.0 1111.9,573.0 1112.0,568.3 1112.2,577.3 1112.3,570.9 1112.4,572.5 1112.6,575.8 1112.7,579.9 1112.8,575.8 1113.0,563.8 1113.1,578.6 1113.2,577.8 1113.4,578.6 1113.5,572.0 1113.6,580.8 1113.8,575.1 1113.9,578.5 1114.0,576.2 1114.2,573.1 1114.3,571.6 1114.4,577.7 1114.6,575.8 1114.7,577.8 1114.8,572.7 1114.9,574.2 1115.1,572.4 1115.2,574.6 1115.3,575.7 1115.5,581.5 1115.6,573.3 1115.7,595.7 1115.9,573.8 1116.0,574.6 1116.1,582.9 1116.3,581.6 1116.4,576.5 1116.5,571.8 1116.7,575.0 1116.8,582.5 1116.9,575.6 1117.1,576.1 1117.2,577.6 1117.3,576.0 1117.5,582.6 1117.6,578.2 1117.7,571.7 1117.9,580.6 1118.0,577.0 1118.1,578.4 1118.3,573.4 1118.4,580.5 1118.5,571.5 1118.7,571.4 1118.8,579.1 1118.9,568.1 1119.0,573.7 1119.2,574.5 1119.3,575.2 1119.4,575.1 1119.6,576.5 1119.7,574.3 1119.8,577.2 1120.0,576.6 1120.1,572.9 1120.2,580.2 1120.4,576.5 1120.5,574.7 1120.6,577.0 1120.8,578.7 1120.9,586.7 1121.0,585.4 1121.2,580.7 1121.3,572.4 1121.4,575.4 1121.6,576.6 1121.7,574.5 1121.8,577.2 1122.0,579.4 1122.1,574.4 1122.2,574.2 1122.4,583.8 1122.5,577.3 1122.6,570.9 1122.8,582.1 1122.9,573.4 1123.0,577.6 1123.2,576.2 1123.3,574.4 1123.4,574.0 1123.5,572.7 1123.7,576.6 1123.8,574.9 1123.9,577.8 1124.1,570.2 1124.2,573.8 1124.3,579.6 1124.5,575.4 1124.6,573.1 1124.7,575.6 1124.9,574.3 1125.0,575.7 1125.1,569.8 1125.3,577.6 1125.4,572.1 1125.5,577.0 1125.7,576.6 1125.8,570.8 1125.9,577.0 1126.1,572.8 1126.2,575.6 1126.3,575.9 1126.5,559.5 1126.6,571.2 1126.7,566.8 1126.9,575.4 1127.0,573.1 1127.1,573.9 1127.3,567.0 1127.4,575.1 1127.5,584.3 1127.6,581.8 1127.8,573.2 1127.9,575.7 1128.0,579.7 1128.2,569.3 1128.3,573.5 1128.4,573.0 1128.6,579.5 1128.7,569.3 1128.8,578.0 1129.0,582.7 1129.1,581.7 1129.2,581.1 1129.4,573.2 1129.5,584.3 1129.6,578.0 1129.8,574.2 1129.9,578.6 1130.0,576.8 1130.2,579.4 1130.3,581.3 1130.4,573.8 1130.6,587.2 1130.7,583.6 1130.8,577.1 1131.0,575.3 1131.1,573.5 1131.2,576.4 1131.4,578.7 1131.5,573.8 1131.6,575.5 1131.8,576.4 1131.9,578.8 1132.0,574.4 1132.1,572.9 1132.3,570.6 1132.4,577.0 1132.5,577.8 1132.7,574.7 1132.8,573.2 1132.9,574.0 1133.1,581.5 1133.2,580.2 1133.3,572.4 1133.5,577.9 1133.6,574.6 1133.7,570.7 1133.9,581.4 1134.0,581.8 1134.1,575.2 1134.3,575.0 1134.4,585.9 1134.5,567.8 1134.7,562.0 1134.8,580.4 1134.9,574.4 1135.1,570.6 1135.2,573.2 1135.3,581.7 1135.5,573.4 1135.6,574.7 1135.7,578.8 1135.9,569.4 1136.0,574.2 1136.1,575.5 1136.2,581.8 1136.4,574.3 1136.5,568.8 1136.6,575.8 1136.8,580.9 1136.9,577.2 1137.0,572.3 1137.2,570.7 1137.3,591.0 1137.4,578.0 1137.6,576.1 1137.7,570.9 1137.8,583.2 1138.0,572.7 1138.1,588.1 1138.2,577.8 1138.4,577.5 1138.5,581.7 1138.6,574.1 1138.8,575.6 1138.9,578.2 1139.0,575.1 1139.2,572.2 1139.3,572.8 1139.4,575.6 1139.6,575.3 1139.7,570.1 1139.8,578.3 1140.0,569.4 1140.1,575.6 1140.2,563.6 1140.3,575.4 1140.5,581.9 1140.6,579.3 1140.7,577.0 1140.9,573.9 1141.0,536.3 1141.1,580.9 1141.3,573.5 1141.4,570.9 1141.5,579.4 1141.7,576.4 1141.8,580.7 1141.9,571.8 1142.1,582.3 1142.2,574.3 1142.3,576.2 1142.5,583.8 1142.6,573.7 1142.7,574.0 1142.9,576.9 1143.0,571.1 1143.1,573.9 1143.3,585.7 1143.4,580.0 1143.5,570.3 1143.7,578.3 1143.8,575.2 1143.9,577.0 1144.1,575.3 1144.2,578.3 1144.3,583.5 1144.5,580.4 1144.6,577.0 1144.7,571.6 1144.8,571.4 1145.0,579.0 1145.1,582.6 1145.2,569.0 1145.4,579.1 1145.5,574.7 1145.6,577.5 1145.8,581.2 1145.9,581.7 1146.0,579.8 1146.2,576.9 1146.3,577.1 1146.4,576.8 1146.6,582.8 1146.7,579.9 1146.8,581.1 1147.0,575.9 1147.1,568.5 1147.2,572.6 1147.4,573.8 1147.5,580.4 1147.6,574.9 1147.8,574.1 1147.9,575.0 1148.0,577.4 1148.2,577.3 1148.3,574.0 1148.4,578.5 1148.6,570.5 1148.7,578.5 1148.8,571.5 1148.9,579.3 1149.1,578.2 1149.2,564.9 1149.3,575.2 1149.5,576.6 1149.6,575.4 1149.7,576.8 1149.9,580.4 1150.0,576.8 1150.1,574.3 1150.3,578.7 1150.4,577.5 1150.5,572.6 1150.7,583.1 1150.8,574.7 1150.9,577.5 1151.1,574.4 1151.2,579.6 1151.3,579.7 1151.5,576.1 1151.6,582.4 1151.7,576.8 1151.9,571.6 1152.0,577.2 1152.1,578.5 1152.3,572.6 1152.4,576.3 1152.5,573.0 1152.7,582.7 1152.8,584.6 1152.9,574.0 1153.1,576.3 1153.2,574.3 1153.3,580.3 1153.4,579.0 1153.6,577.7 1153.7,590.2 1153.8,573.2 1154.0,581.5 1154.1,583.5 1154.2,575.3 1154.4,577.5 1154.5,579.7 1154.6,580.5 1154.8,580.7 1154.9,566.3 1155.0,574.2 1155.2,578.1 1155.3,575.7 1155.4,579.4 1155.6,572.9 1155.7,577.4 1155.8,572.5 1156.0,576.3 1156.1,573.8 1156.2,579.6 1156.4,566.0 1156.5,573.7 1156.6,571.0 1156.8,576.6 1156.9,582.5 1157.0,578.8 1157.2,575.9 1157.3,574.8 1157.4,579.2 1157.5,579.9 1157.7,575.5 1157.8,578.1 1157.9,574.9 1158.1,571.3 1158.2,575.7 1158.3,577.7 1158.5,574.3 1158.6,572.6 1158.7,581.1 1158.9,576.3 1159.0,581.8 1159.1,574.6 1159.3,573.8 1159.4,575.3 1159.5,571.1 1159.7,582.7 1159.8,577.7 1159.9,578.3 1160.1,572.8 1160.2,578.1 1160.3,575.5 1160.5,570.2 1160.6,582.4 1160.7,577.3 1160.9,573.6 1161.0,575.1 1161.1,579.7 1161.3,565.8 1161.4,574.6 1161.5,582.9 1161.7,572.1 1161.8,576.3 1161.9,572.4 1162.0,572.0 1162.2,572.8 1162.3,580.9 1162.4,582.0 1162.6,576.5 1162.7,582.4 1162.8,577.6 1163.0,579.3 1163.1,580.7 1163.2,576.3 1163.4,578.7 1163.5,577.0 1163.6,573.6 1163.8,577.9 1163.9,572.9 1164.0,582.5 1164.2,577.8 1164.3,577.3 1164.4,572.0 1164.6,575.4 1164.7,578.2 1164.8,575.4 1165.0,574.4 1165.1,579.4 1165.2,573.4 1165.4,581.5 1165.5,578.1 1165.6,570.9 1165.8,574.9 1165.9,577.6 1166.0,575.7 1166.1,570.1 1166.3,577.0 1166.4,573.8 1166.5,576.6 1166.7,573.7 1166.8,574.2 1166.9,571.7 1167.1,571.5 1167.2,581.0 1167.3,568.6 1167.5,581.1 1167.6,575.1 1167.7,577.7 1167.9,578.6 1168.0,578.7 1168.1,577.5 1168.3,582.7 1168.4,577.3 1168.5,575.2 1168.7,573.8 1168.8,569.6 1168.9,572.3 1169.1,576.3 1169.2,578.5 1169.3,580.6 1169.5,579.7 1169.6,574.4 1169.7,578.5 1169.9,577.2 1170.0,578.1 1170.1,575.4 1170.2,574.8 1170.4,572.0 1170.5,582.8 1170.6,577.3 1170.8,571.7 1170.9,579.2 1171.0,580.2 1171.2,566.8 1171.3,579.2 1171.4,574.2 1171.6,570.2 1171.7,577.5 1171.8,574.7 1172.0,579.8 1172.1,576.6 1172.2,574.7 1172.4,573.8 1172.5,578.0 1172.6,571.9 1172.8,573.1 1172.9,577.6 1173.0,572.2 1173.2,576.8 1173.3,580.5 1173.4,572.8 1173.6,576.9 1173.7,569.0 1173.8,572.2 1174.0,562.6 1174.1,576.7 1174.2,576.1 1174.4,576.6 1174.5,569.4 1174.6,573.9 1174.7,575.0 1174.9,572.4 1175.0,567.4 1175.1,576.2 1175.3,569.0 1175.4,575.8 1175.5,575.3 1175.7,579.2 1175.8,574.9 1175.9,572.2 1176.1,576.3 1176.2,579.0 1176.3,579.2 1176.5,575.2 1176.6,580.8 1176.7,574.1 1176.9,576.2 1177.0,574.0 1177.1,578.1 1177.3,584.7 1177.4,577.0 1177.5,576.3 1177.7,577.9 1177.8,574.6 1177.9,576.6 1178.1,576.6 1178.2,576.7 1178.3,575.5 1178.5,581.3 1178.6,575.8 1178.7,576.3 1178.8,564.3 1179.0,572.7 1179.1,573.1 1179.2,572.5 1179.4,576.9 1179.5,577.2 1179.6,575.8 1179.8,573.6 1179.9,573.3 1180.0,579.8 1180.2,575.5 1180.3,581.1 1180.4,587.5 1180.6,578.2 1180.7,580.9 1180.8,574.3 1181.0,581.9 1181.1,584.4 1181.2,577.5 1181.4,571.3 1181.5,577.2 1181.6,573.1 1181.8,568.4 1181.9,576.4 1182.0,572.4 1182.2,570.0 1182.3,582.1 1182.4,575.1 1182.6,576.6 1182.7,583.5 1182.8,574.6" fill="none" stroke="#0000ff" stroke-width="1.7" stroke-linejoin="round"/>
<rect x="911" y="516.7" width="274" height="120.2" fill="none" stroke="#111" stroke-width="1.7"/>
<line x1="904.5" y1="533.7" x2="911" y2="533.7" stroke="#111" stroke-width="1.5"/>
<text x="895" y="537.3" font-size="10.2" text-anchor="end" textLength="17.85" lengthAdjust="spacingAndGlyphs">100</text>
<line x1="904.5" y1="575.9" x2="911" y2="575.9" stroke="#111" stroke-width="1.5"/>
<text x="895" y="579.5" font-size="10.2" text-anchor="end" textLength="5.95" lengthAdjust="spacingAndGlyphs">0</text>
<line x1="904.5" y1="617.8" x2="911" y2="617.8" stroke="#111" stroke-width="1.5"/>
<text x="895" y="621.4" font-size="10.2" text-anchor="end" textLength="26.1" lengthAdjust="spacingAndGlyphs">−100</text>
<line x1="912" y1="636.9" x2="912" y2="643.4" stroke="#111" stroke-width="1.5"/>
<text x="912" y="660.3" font-size="10.2" text-anchor="middle" textLength="5.95" lengthAdjust="spacingAndGlyphs">0</text>
<line x1="977.8" y1="636.9" x2="977.8" y2="643.4" stroke="#111" stroke-width="1.5"/>
<text x="977.8" y="660.3" font-size="10.2" text-anchor="middle" textLength="17.85" lengthAdjust="spacingAndGlyphs">500</text>
<line x1="1044.6" y1="636.9" x2="1044.6" y2="643.4" stroke="#111" stroke-width="1.5"/>
<text x="1044.6" y="660.3" font-size="10.2" text-anchor="middle" textLength="23.8" lengthAdjust="spacingAndGlyphs">1000</text>
<line x1="1111.1" y1="636.9" x2="1111.1" y2="643.4" stroke="#111" stroke-width="1.5"/>
<text x="1111.1" y="660.3" font-size="10.2" text-anchor="middle" textLength="23.8" lengthAdjust="spacingAndGlyphs">1500</text>
<line x1="1176.6" y1="636.9" x2="1176.6" y2="643.4" stroke="#111" stroke-width="1.5"/>
<text x="1176.6" y="660.3" font-size="10.2" text-anchor="middle" textLength="23.8" lengthAdjust="spacingAndGlyphs">2000</text>
<text x="1047.6" y="678.5" font-size="10.2" text-anchor="middle">X</text>
<text transform="translate(856.5,578) rotate(-90)" font-size="10.2" text-anchor="middle" textLength="34.5" lengthAdjust="spacingAndGlyphs">counts</text>
<text transform="translate(1193.4,575.4) rotate(90)" font-size="10.2" text-anchor="middle" textLength="39" lengthAdjust="spacingAndGlyphs">cut in x</text>
<rect x="1109" y="520" width="72.4" height="15.8" rx="2" fill="#fff" fill-opacity="0.8" stroke="#d0d0d0" stroke-width="1"/>
<line x1="1111.6" y1="527.9" x2="1133.7" y2="527.9" stroke="#0000ff" stroke-width="1.5"/>
<text x="1137.3" y="531.4" font-size="10.2" text-anchor="start" textLength="39.8" lengthAdjust="spacingAndGlyphs">y=1024</text>
<polyline clip-path="url(#c2)" points="912.0,752.2 912.1,744.2 912.3,747.7 912.4,746.2 912.5,747.0 912.7,744.9 912.8,746.2 912.9,750.9 913.1,748.2 913.2,743.3 913.3,745.8 913.5,753.3 913.6,749.8 913.7,740.4 913.9,747.6 914.0,745.8 914.1,748.5 914.2,750.7 914.4,746.1 914.5,747.3 914.6,756.4 914.8,746.2 914.9,739.8 915.0,739.8 915.2,760.4 915.3,754.5 915.4,746.9 915.6,744.1 915.7,770.5 915.8,744.6 916.0,747.2 916.1,750.8 916.2,743.4 916.4,753.0 916.5,749.2 916.6,753.6 916.8,754.9 916.9,749.9 917.0,745.6 917.2,742.3 917.3,746.7 917.4,750.7 917.6,741.9 917.7,749.4 917.8,742.9 918.0,743.7 918.1,752.2 918.2,747.8 918.4,742.4 918.5,747.1 918.6,749.5 918.7,744.3 918.9,743.7 919.0,751.9 919.1,743.8 919.3,744.0 919.4,747.4 919.5,743.4 919.7,749.9 919.8,734.8 919.9,745.0 920.1,745.3 920.2,743.1 920.3,750.4 920.5,750.2 920.6,748.2 920.7,745.9 920.9,751.5 921.0,750.0 921.1,750.5 921.3,745.5 921.4,742.4 921.5,750.7 921.7,745.5 921.8,757.1 921.9,755.0 922.1,743.7 922.2,747.9 922.3,754.2 922.5,745.2 922.6,744.2 922.7,746.8 922.8,749.4 923.0,757.1 923.1,750.3 923.2,736.2 923.4,748.6 923.5,746.7 923.6,746.2 923.8,754.0 923.9,744.5 924.0,744.7 924.2,747.7 924.3,746.7 924.4,741.5 924.6,750.7 924.7,737.5 924.8,742.5 925.0,751.0 925.1,746.2 925.2,748.7 925.4,749.2 925.5,752.4 925.6,748.5 925.8,753.6 925.9,750.8 926.0,753.3 926.2,749.3 926.3,748.9 926.4,744.4 926.6,749.3 926.7,747.0 926.8,749.6 926.9,749.0 927.1,742.7 927.2,749.8 927.3,745.2 927.5,752.7 927.6,754.6 927.7,742.7 927.9,750.3 928.0,752.2 928.1,753.0 928.3,750.3 928.4,753.6 928.5,748.4 928.7,745.0 928.8,747.9 928.9,742.9 929.1,746.6 929.2,746.0 929.3,747.5 929.5,742.4 929.6,747.3 929.7,747.4 929.9,748.2 930.0,754.9 930.1,749.2 930.3,743.1 930.4,738.4 930.5,747.7 930.7,746.2 930.8,727.0 930.9,745.0 931.1,757.9 931.2,751.7 931.3,753.2 931.4,750.5 931.6,743.2 931.7,742.8 931.8,740.3 932.0,745.2 932.1,749.7 932.2,755.5 932.4,742.1 932.5,747.6 932.6,751.7 932.8,743.0 932.9,747.6 933.0,760.9 933.2,744.6 933.3,746.2 933.4,744.1 933.6,745.6 933.7,742.3 933.8,745.5 934.0,753.3 934.1,750.9 934.2,755.0 934.4,754.1 934.5,748.3 934.6,756.9 934.8,746.2 934.9,743.9 935.0,737.2 935.2,746.9 935.3,750.2 935.4,754.6 935.5,740.3 935.7,741.4 935.8,740.1 935.9,741.3 936.1,745.8 936.2,742.6 936.3,747.5 936.5,747.6 936.6,749.8 936.7,739.7 936.9,747.0 937.0,746.7 937.1,746.1 937.3,752.4 937.4,748.6 937.5,747.8 937.7,758.0 937.8,748.4 937.9,742.1 938.1,743.2 938.2,749.5 938.3,743.8 938.5,741.7 938.6,747.1 938.7,746.6 938.9,752.4 939.0,745.2 939.1,750.9 939.3,746.3 939.4,744.5 939.5,741.2 939.7,739.8 939.8,580.1 939.9,744.5 940.0,752.3 940.2,742.2 940.3,735.9 940.4,747.5 940.6,750.5 940.7,750.5 940.8,752.2 941.0,744.4 941.1,745.3 941.2,743.0 941.4,738.4 941.5,747.0 941.6,749.2 941.8,742.0 941.9,743.1 942.0,747.1 942.2,746.8 942.3,750.5 942.4,749.9 942.6,747.7 942.7,745.3 942.8,748.2 943.0,746.4 943.1,752.8 943.2,749.8 943.4,753.9 943.5,758.3 943.6,745.1 943.8,741.3 943.9,740.7 944.0,740.7 944.1,741.6 944.3,751.5 944.4,754.9 944.5,744.0 944.7,745.5 944.8,746.9 944.9,738.3 945.1,747.6 945.2,744.3 945.3,741.6 945.5,752.5 945.6,748.1 945.7,744.6 945.9,743.3 946.0,746.0 946.1,742.8 946.3,744.4 946.4,748.7 946.5,745.0 946.7,748.5 946.8,746.0 946.9,743.9 947.1,745.7 947.2,747.5 947.3,749.1 947.5,751.1 947.6,756.4 947.7,750.7 947.9,754.0 948.0,743.3 948.1,746.6 948.3,747.1 948.4,746.8 948.5,747.8 948.6,747.6 948.8,751.2 948.9,755.6 949.0,747.4 949.2,742.3 949.3,750.4 949.4,752.8 949.6,740.9 949.7,746.7 949.8,750.8 950.0,747.2 950.1,733.9 950.2,747.6 950.4,748.0 950.5,741.8 950.6,735.3 950.8,735.0 950.9,751.0 951.0,745.5 951.2,745.7 951.3,749.9 951.4,746.7 951.6,746.3 951.7,751.5 951.8,744.5 952.0,747.0 952.1,748.5 952.2,750.5 952.4,750.2 952.5,737.8 952.6,741.2 952.7,751.4 952.9,754.3 953.0,750.3 953.1,750.5 953.3,748.2 953.4,749.1 953.5,744.2 953.7,751.0 953.8,750.6 953.9,747.6 954.1,748.1 954.2,730.8 954.3,753.2 954.5,747.3 954.6,748.6 954.7,752.1 954.9,759.2 955.0,745.4 955.1,744.1 955.3,748.3 955.4,749.3 955.5,754.0 955.7,746.8 955.8,749.7 955.9,753.5 956.1,744.9 956.2,746.1 956.3,748.5 956.5,744.9 956.6,748.9 956.7,753.6 956.8,750.0 957.0,753.8 957.1,747.5 957.2,744.9 957.4,754.3 957.5,741.7 957.6,745.8 957.8,748.7 957.9,752.2 958.0,745.4 958.2,746.7 958.3,751.4 958.4,742.1 958.6,757.2 958.7,751.0 958.8,752.8 959.0,743.4 959.1,749.9 959.2,759.5 959.4,748.0 959.5,747.4 959.6,749.2 959.8,745.0 959.9,754.7 960.0,749.0 960.2,749.9 960.3,744.8 960.4,734.1 960.6,755.6 960.7,750.1 960.8,751.7 961.0,756.3 961.1,747.2 961.2,748.4 961.3,746.0 961.5,750.3 961.6,746.9 961.7,741.1 961.9,745.5 962.0,747.4 962.1,757.1 962.3,742.5 962.4,742.9 962.5,747.0 962.7,747.0 962.8,749.6 962.9,749.6 963.1,745.7 963.2,752.5 963.3,745.3 963.5,750.5 963.6,748.1 963.7,747.6 963.9,744.7 964.0,745.1 964.1,743.1 964.3,744.2 964.4,750.5 964.5,749.8 964.7,743.9 964.8,754.1 964.9,746.6 965.1,744.6 965.2,744.9 965.3,751.3 965.4,754.4 965.6,752.9 965.7,739.9 965.8,749.3 966.0,742.9 966.1,754.9 966.2,746.1 966.4,746.7 966.5,752.0 966.6,750.3 966.8,749.8 966.9,744.6 967.0,755.0 967.2,741.0 967.3,753.3 967.4,746.8 967.6,750.5 967.7,741.6 967.8,752.7 968.0,747.0 968.1,742.0 968.2,744.1 968.4,752.6 968.5,745.6 968.6,748.1 968.8,746.3 968.9,760.4 969.0,751.5 969.2,750.9 969.3,746.8 969.4,753.6 969.6,745.6 969.7,752.2 969.8,746.0 969.9,733.4 970.1,748.9 970.2,742.0 970.3,750.3 970.5,749.4 970.6,744.7 970.7,750.0 970.9,748.3 971.0,748.8 971.1,755.5 971.3,743.2 971.4,749.0 971.5,749.5 971.7,744.7 971.8,749.5 971.9,743.3 972.1,748.3 972.2,748.2 972.3,750.3 972.5,746.3 972.6,745.9 972.7,740.8 972.9,744.2 973.0,743.7 973.1,750.8 973.3,741.6 973.4,749.1 973.5,744.3 973.7,753.6 973.8,745.1 973.9,749.2 974.0,746.2 974.2,747.7 974.3,752.1 974.4,745.8 974.6,747.3 974.7,749.9 974.8,742.3 975.0,748.2 975.1,750.9 975.2,751.4 975.4,739.5 975.5,746.6 975.6,740.8 975.8,752.9 975.9,746.1 976.0,745.2 976.2,743.9 976.3,743.8 976.4,747.9 976.6,741.9 976.7,751.6 976.8,744.3 977.0,749.9 977.1,749.8 977.2,739.9 977.4,748.2 977.5,749.8 977.6,749.7 977.8,753.2 977.9,744.8 978.0,749.3 978.1,747.1 978.3,747.5 978.4,758.3 978.5,749.4 978.7,749.0 978.8,745.4 978.9,754.1 979.1,747.6 979.2,749.0 979.3,748.3 979.5,741.2 979.6,746.2 979.7,741.1 979.9,749.3 980.0,742.9 980.1,750.5 980.3,745.8 980.4,747.3 980.5,756.8 980.7,746.4 980.8,747.0 980.9,744.1 981.1,747.5 981.2,745.6 981.3,744.5 981.5,750.1 981.6,743.8 981.7,747.3 981.9,744.3 982.0,745.7 982.1,755.0 982.3,754.0 982.4,743.9 982.5,753.6 982.6,751.0 982.8,742.6 982.9,739.7 983.0,752.6 983.2,747.0 983.3,753.8 983.4,745.8 983.6,739.8 983.7,749.9 983.8,747.3 984.0,742.4 984.1,751.0 984.2,742.2 984.4,745.4 984.5,754.3 984.6,748.0 984.8,729.9 984.9,755.4 985.0,751.8 985.2,745.2 985.3,742.9 985.4,751.8 985.6,746.1 985.7,752.7 985.8,739.9 986.0,750.0 986.1,742.2 986.2,739.4 986.4,749.5 986.5,752.0 986.6,751.7 986.7,745.0 986.9,749.2 987.0,753.3 987.1,737.6 987.3,748.7 987.4,756.1 987.5,753.5 987.7,751.4 987.8,749.0 987.9,748.0 988.1,749.0 988.2,751.8 988.3,744.5 988.5,747.6 988.6,750.9 988.7,746.0 988.9,750.7 989.0,748.8 989.1,754.4 989.3,752.3 989.4,744.6 989.5,742.2 989.7,754.2 989.8,747.0 989.9,740.4 990.1,752.5 990.2,748.2 990.3,747.2 990.5,748.1 990.6,751.1 990.7,750.1 990.9,745.8 991.0,740.8 991.1,751.8 991.2,748.9 991.4,753.6 991.5,749.3 991.6,743.3 991.8,749.5 991.9,747.5 992.0,749.7 992.2,741.5 992.3,742.0 992.4,740.3 992.6,748.4 992.7,742.3 992.8,740.7 993.0,747.6 993.1,749.5 993.2,740.6 993.4,748.5 993.5,745.9 993.6,751.5 993.8,751.3 993.9,744.8 994.0,746.1 994.2,751.6 994.3,752.6 994.4,747.2 994.6,744.1 994.7,743.7 994.8,745.3 995.0,752.6 995.1,746.1 995.2,752.1 995.3,751.8 995.5,755.5 995.6,740.9 995.7,748.5 995.9,749.0 996.0,753.6 996.1,749.2 996.3,746.5 996.4,742.7 996.5,746.3 996.7,751.8 996.8,745.0 996.9,744.0 997.1,743.5 997.2,752.6 997.3,752.4 997.5,747.4 997.6,747.1 997.7,745.3 997.9,755.1 998.0,744.5 998.1,747.4 998.3,745.3 998.4,745.0 998.5,734.4 998.7,744.7 998.8,746.6 998.9,748.4 999.1,745.7 999.2,745.6 999.3,746.5 999.5,752.3 999.6,750.2 999.7,743.0 999.8,749.1 1000.0,747.8 1000.1,741.5 1000.2,755.8 1000.4,748.0 1000.5,748.7 1000.6,742.3 1000.8,746.4 1000.9,736.1 1001.0,744.1 1001.2,749.8 1001.3,742.5 1001.4,746.7 1001.6,746.0 1001.7,749.5 1001.8,748.5 1002.0,580.1 1002.1,749.2 1002.2,745.6 1002.4,751.8 1002.5,751.5 1002.6,743.3 1002.8,742.0 1002.9,744.1 1003.0,744.9 1003.2,746.3 1003.3,753.5 1003.4,744.2 1003.6,746.0 1003.7,752.4 1003.8,740.8 1003.9,746.9 1004.1,751.2 1004.2,745.2 1004.3,750.6 1004.5,748.9 1004.6,742.2 1004.7,742.2 1004.9,751.7 1005.0,744.6 1005.1,747.9 1005.3,753.6 1005.4,741.3 1005.5,753.8 1005.7,748.1 1005.8,745.0 1005.9,752.4 1006.1,744.8 1006.2,742.3 1006.3,750.2 1006.5,759.1 1006.6,746.8 1006.7,741.6 1006.9,749.8 1007.0,748.6 1007.1,756.9 1007.3,752.0 1007.4,750.2 1007.5,747.6 1007.7,742.8 1007.8,755.7 1007.9,746.6 1008.0,743.8 1008.2,753.9 1008.3,750.8 1008.4,748.0 1008.6,742.7 1008.7,736.3 1008.8,740.9 1009.0,747.1 1009.1,750.5 1009.2,745.1 1009.4,741.7 1009.5,744.9 1009.6,737.2 1009.8,750.4 1009.9,746.8 1010.0,745.6 1010.2,748.3 1010.3,747.1 1010.4,746.4 1010.6,752.8 1010.7,743.7 1010.8,739.1 1011.0,745.1 1011.1,743.2 1011.2,743.9 1011.4,741.8 1011.5,750.1 1011.6,729.1 1011.8,748.6 1011.9,747.4 1012.0,752.2 1012.2,740.2 1012.3,750.7 1012.4,751.1 1012.5,744.4 1012.7,750.4 1012.8,750.9 1012.9,751.1 1013.1,742.1 1013.2,740.4 1013.3,745.5 1013.5,746.0 1013.6,746.3 1013.7,748.5 1013.9,750.7 1014.0,746.5 1014.1,754.5 1014.3,755.7 1014.4,739.9 1014.5,749.3 1014.7,753.1 1014.8,744.1 1014.9,754.5 1015.1,749.0 1015.2,747.3 1015.3,745.2 1015.5,746.6 1015.6,753.4 1015.7,742.3 1015.9,742.7 1016.0,741.8 1016.1,738.0 1016.3,742.0 1016.4,750.8 1016.5,744.7 1016.6,747.3 1016.8,750.3 1016.9,744.4 1017.0,755.8 1017.2,752.3 1017.3,742.4 1017.4,750.7 1017.6,744.2 1017.7,751.2 1017.8,750.9 1018.0,745.5 1018.1,740.9 1018.2,745.4 1018.4,745.6 1018.5,748.9 1018.6,747.4 1018.8,750.3 1018.9,746.1 1019.0,752.3 1019.2,744.7 1019.3,755.0 1019.4,735.4 1019.6,748.2 1019.7,753.5 1019.8,745.9 1020.0,747.2 1020.1,740.1 1020.2,745.0 1020.4,748.0 1020.5,748.6 1020.6,752.2 1020.8,748.7 1020.9,743.9 1021.0,749.9 1021.1,749.5 1021.3,746.7 1021.4,744.4 1021.5,751.5 1021.7,738.2 1021.8,747.0 1021.9,744.1 1022.1,744.4 1022.2,747.9 1022.3,751.4 1022.5,747.0 1022.6,746.6 1022.7,746.8 1022.9,742.6 1023.0,743.5 1023.1,749.2 1023.3,743.2 1023.4,743.1 1023.5,741.8 1023.7,747.8 1023.8,739.7 1023.9,744.0 1024.1,750.5 1024.2,746.5 1024.3,740.4 1024.5,746.7 1024.6,746.6 1024.7,752.2 1024.9,740.5 1025.0,746.4 1025.1,758.9 1025.2,729.6 1025.4,749.7 1025.5,742.0 1025.6,744.2 1025.8,740.9 1025.9,744.9 1026.0,754.4 1026.2,747.5 1026.3,751.8 1026.4,753.2 1026.6,747.6 1026.7,748.3 1026.8,747.9 1027.0,748.5 1027.1,751.0 1027.2,749.6 1027.4,745.3 1027.5,743.5 1027.6,751.5 1027.8,748.8 1027.9,748.7 1028.0,752.8 1028.2,749.7 1028.3,748.7 1028.4,752.6 1028.6,748.2 1028.7,745.9 1028.8,739.6 1029.0,742.9 1029.1,749.5 1029.2,746.7 1029.4,749.9 1029.5,752.5 1029.6,742.9 1029.7,757.4 1029.9,749.4 1030.0,735.3 1030.1,750.9 1030.3,747.1 1030.4,740.5 1030.5,737.2 1030.7,750.1 1030.8,746.1 1030.9,746.4 1031.1,743.0 1031.2,747.3 1031.3,748.1 1031.5,743.8 1031.6,745.1 1031.7,743.3 1031.9,756.3 1032.0,756.4 1032.1,751.4 1032.3,749.2 1032.4,753.9 1032.5,749.1 1032.7,747.6 1032.8,744.7 1032.9,751.3 1033.1,751.5 1033.2,742.6 1033.3,747.7 1033.5,746.6 1033.6,749.0 1033.7,745.7 1033.8,751.8 1034.0,747.8 1034.1,741.1 1034.2,747.8 1034.4,744.8 1034.5,755.5 1034.6,748.2 1034.8,751.0 1034.9,755.8 1035.0,754.3 1035.2,748.3 1035.3,744.3 1035.4,753.1 1035.6,747.5 1035.7,744.1 1035.8,750.1 1036.0,756.2 1036.1,738.7 1036.2,738.6 1036.4,745.3 1036.5,746.6 1036.6,745.2 1036.8,743.5 1036.9,724.5 1037.0,747.5 1037.2,747.0 1037.3,751.7 1037.4,746.0 1037.6,753.0 1037.7,744.6 1037.8,745.5 1037.9,750.1 1038.1,742.6 1038.2,740.4 1038.3,751.2 1038.5,752.2 1038.6,738.0 1038.7,747.1 1038.9,746.7 1039.0,748.9 1039.1,744.8 1039.3,749.6 1039.4,748.3 1039.5,745.3 1039.7,744.8 1039.8,743.1 1039.9,743.6 1040.1,752.9 1040.2,749.3 1040.3,738.1 1040.5,757.3 1040.6,750.4 1040.7,748.3 1040.9,750.1 1041.0,754.2 1041.1,749.9 1041.3,749.4 1041.4,743.4 1041.5,743.3 1041.7,747.8 1041.8,750.0 1041.9,745.4 1042.1,748.5 1042.2,750.3 1042.3,746.2 1042.4,748.7 1042.6,747.0 1042.7,751.2 1042.8,742.3 1043.0,748.5 1043.1,738.2 1043.2,756.6 1043.4,743.4 1043.5,751.0 1043.6,739.7 1043.8,746.0 1043.9,744.6 1044.0,745.1 1044.2,754.0 1044.3,752.2 1044.4,749.5 1044.6,746.3 1044.7,749.1 1044.8,753.8 1045.0,744.2 1045.1,744.9 1045.2,742.2 1045.4,720.7 1045.5,748.7 1045.6,740.1 1045.8,753.8 1045.9,748.0 1046.0,736.9 1046.2,750.2 1046.3,750.2 1046.4,751.3 1046.5,763.0 1046.7,742.0 1046.8,748.5 1046.9,752.0 1047.1,746.6 1047.2,742.7 1047.3,751.6 1047.5,748.0 1047.6,748.0 1047.7,745.0 1047.9,753.7 1048.0,750.4 1048.1,746.6 1048.3,748.5 1048.4,743.8 1048.5,741.4 1048.7,748.7 1048.8,753.7 1048.9,746.9 1049.1,749.4 1049.2,744.6 1049.3,751.0 1049.5,752.6 1049.6,743.6 1049.7,744.3 1049.9,749.9 1050.0,752.1 1050.1,750.3 1050.3,751.6 1050.4,754.7 1050.5,744.3 1050.7,748.3 1050.8,747.9 1050.9,748.0 1051.0,750.9 1051.2,745.7 1051.3,747.9 1051.4,745.9 1051.6,746.5 1051.7,750.4 1051.8,752.8 1052.0,753.5 1052.1,752.8 1052.2,746.8 1052.4,744.9 1052.5,751.7 1052.6,750.3 1052.8,746.2 1052.9,739.8 1053.0,756.2 1053.2,745.3 1053.3,736.0 1053.4,749.4 1053.6,744.0 1053.7,748.2 1053.8,745.2 1054.0,742.8 1054.1,749.6 1054.2,754.9 1054.4,743.0 1054.5,748.9 1054.6,744.1 1054.8,750.5 1054.9,751.6 1055.0,742.0 1055.1,752.4 1055.3,744.3 1055.4,745.9 1055.5,753.5 1055.7,750.6 1055.8,737.3 1055.9,748.9 1056.1,752.5 1056.2,753.1 1056.3,750.2 1056.5,739.2 1056.6,748.7 1056.7,741.4 1056.9,749.6 1057.0,749.1 1057.1,741.9 1057.3,741.0 1057.4,749.8 1057.5,744.1 1057.7,754.2 1057.8,745.5 1057.9,751.7 1058.1,743.8 1058.2,747.0 1058.3,739.2 1058.5,746.3 1058.6,753.3 1058.7,742.0 1058.9,757.3 1059.0,744.5 1059.1,747.3 1059.2,741.6 1059.4,748.6 1059.5,752.9 1059.6,754.4 1059.8,755.1 1059.9,752.8 1060.0,757.6 1060.2,749.1 1060.3,750.8 1060.4,752.0 1060.6,746.9 1060.7,749.4 1060.8,752.4 1061.0,748.0 1061.1,749.5 1061.2,738.2 1061.4,751.4 1061.5,748.6 1061.6,751.7 1061.8,736.4 1061.9,750.9 1062.0,746.2 1062.2,739.1 1062.3,741.2 1062.4,754.6 1062.6,757.6 1062.7,748.9 1062.8,746.6 1063.0,751.1 1063.1,749.7 1063.2,748.7 1063.4,752.0 1063.5,744.7 1063.6,750.4 1063.7,752.2 1063.9,749.6 1064.0,755.0 1064.1,750.0 1064.3,737.5 1064.4,741.2 1064.5,744.8 1064.7,756.5 1064.8,748.6 1064.9,745.5 1065.1,753.9 1065.2,752.0 1065.3,750.3 1065.5,748.3 1065.6,739.3 1065.7,747.7 1065.9,741.2 1066.0,744.2 1066.1,750.9 1066.3,750.5 1066.4,746.3 1066.5,751.5 1066.7,746.7 1066.8,744.9 1066.9,749.1 1067.1,748.8 1067.2,742.3 1067.3,750.4 1067.5,746.5 1067.6,750.5 1067.7,743.3 1067.8,749.4 1068.0,745.7 1068.1,746.8 1068.2,747.2 1068.4,744.7 1068.5,741.7 1068.6,746.2 1068.8,743.2 1068.9,751.3 1069.0,745.3 1069.2,757.6 1069.3,749.0 1069.4,741.1 1069.6,750.1 1069.7,746.9 1069.8,743.3 1070.0,744.7 1070.1,744.7 1070.2,743.9 1070.4,746.1 1070.5,749.2 1070.6,746.3 1070.8,745.7 1070.9,742.3 1071.0,747.0 1071.2,740.9 1071.3,747.6 1071.4,754.3 1071.6,756.2 1071.7,739.0 1071.8,739.9 1072.0,748.3 1072.1,748.5 1072.2,743.4 1072.3,740.9 1072.5,743.1 1072.6,747.0 1072.7,745.4 1072.9,744.1 1073.0,742.5 1073.1,744.9 1073.3,755.6 1073.4,742.0 1073.5,740.3 1073.7,756.9 1073.8,743.7 1073.9,751.2 1074.1,751.9 1074.2,750.1 1074.3,764.4 1074.5,745.5 1074.6,750.2 1074.7,744.5 1074.9,745.8 1075.0,747.7 1075.1,750.7 1075.3,749.1 1075.4,751.0 1075.5,745.3 1075.7,743.6 1075.8,747.2 1075.9,749.6 1076.1,745.6 1076.2,752.2 1076.3,747.4 1076.4,744.0 1076.6,741.6 1076.7,744.4 1076.8,747.7 1077.0,744.8 1077.1,749.9 1077.2,755.1 1077.4,747.5 1077.5,757.3 1077.6,756.4 1077.8,745.6 1077.9,745.6 1078.0,746.6 1078.2,755.1 1078.3,757.4 1078.4,742.2 1078.6,754.7 1078.7,752.8 1078.8,746.1 1079.0,745.5 1079.1,757.7 1079.2,748.3 1079.4,747.0 1079.5,743.6 1079.6,748.8 1079.8,745.6 1079.9,756.1 1080.0,751.6 1080.2,749.0 1080.3,749.5 1080.4,744.6 1080.6,747.7 1080.7,752.4 1080.8,746.7 1080.9,744.4 1081.1,747.3 1081.2,749.2 1081.3,745.3 1081.5,750.7 1081.6,754.2 1081.7,744.4 1081.9,745.7 1082.0,746.6 1082.1,743.5 1082.3,745.1 1082.4,749.5 1082.5,748.4 1082.7,744.0 1082.8,751.8 1082.9,762.4 1083.1,748.0 1083.2,751.1 1083.3,750.6 1083.5,745.2 1083.6,747.6 1083.7,751.3 1083.9,738.2 1084.0,749.4 1084.1,750.7 1084.3,747.8 1084.4,744.6 1084.5,750.2 1084.7,743.2 1084.8,744.1 1084.9,741.6 1085.0,752.4 1085.2,752.4 1085.3,749.1 1085.4,751.3 1085.6,746.3 1085.7,749.4 1085.8,751.0 1086.0,752.6 1086.1,741.3 1086.2,742.3 1086.4,747.8 1086.5,748.5 1086.6,749.6 1086.8,750.3 1086.9,749.8 1087.0,749.1 1087.2,745.4 1087.3,739.3 1087.4,747.4 1087.6,750.0 1087.7,741.2 1087.8,744.0 1088.0,746.5 1088.1,747.8 1088.2,748.7 1088.4,748.0 1088.5,754.9 1088.6,743.5 1088.8,750.8 1088.9,747.1 1089.0,749.8 1089.1,740.0 1089.3,741.7 1089.4,743.1 1089.5,746.4 1089.7,752.2 1089.8,750.7 1089.9,744.3 1090.1,748.6 1090.2,745.7 1090.3,751.4 1090.5,744.8 1090.6,757.2 1090.7,749.4 1090.9,752.1 1091.0,749.0 1091.1,743.6 1091.3,747.8 1091.4,747.1 1091.5,743.7 1091.7,748.3 1091.8,756.4 1091.9,743.9 1092.1,746.3 1092.2,746.2 1092.3,744.6 1092.5,743.1 1092.6,753.1 1092.7,749.4 1092.9,748.7 1093.0,748.1 1093.1,757.8 1093.3,748.4 1093.4,742.8 1093.5,750.5 1093.6,749.2 1093.8,746.4 1093.9,745.4 1094.0,743.9 1094.2,745.4 1094.3,742.5 1094.4,751.8 1094.6,748.2 1094.7,743.3 1094.8,742.3 1095.0,742.6 1095.1,751.6 1095.2,744.7 1095.4,753.2 1095.5,741.8 1095.6,738.2 1095.8,742.6 1095.9,743.9 1096.0,748.3 1096.2,745.3 1096.3,736.9 1096.4,747.5 1096.6,744.0 1096.7,753.1 1096.8,740.7 1097.0,751.2 1097.1,745.0 1097.2,748.7 1097.4,740.7 1097.5,739.7 1097.6,743.1 1097.7,742.4 1097.9,746.4 1098.0,749.6 1098.1,747.3 1098.3,743.4 1098.4,747.6 1098.5,745.5 1098.7,746.9 1098.8,773.9 1098.9,750.7 1099.1,744.1 1099.2,751.5 1099.3,747.0 1099.5,747.0 1099.6,749.6 1099.7,750.7 1099.9,746.9 1100.0,745.6 1100.1,744.8 1100.3,752.6 1100.4,753.7 1100.5,745.2 1100.7,747.3 1100.8,746.1 1100.9,753.9 1101.1,754.4 1101.2,745.5 1101.3,749.2 1101.5,742.0 1101.6,742.2 1101.7,747.9 1101.9,750.6 1102.0,746.6 1102.1,748.5 1102.2,752.4 1102.4,750.3 1102.5,755.6 1102.6,749.7 1102.8,751.9 1102.9,753.8 1103.0,740.1 1103.2,746.9 1103.3,745.4 1103.4,753.1 1103.6,749.7 1103.7,745.2 1103.8,748.9 1104.0,751.2 1104.1,753.1 1104.2,742.4 1104.4,756.8 1104.5,742.5 1104.6,746.2 1104.8,746.7 1104.9,744.4 1105.0,743.8 1105.2,749.3 1105.3,753.7 1105.4,749.2 1105.6,747.7 1105.7,757.5 1105.8,740.9 1106.0,744.6 1106.1,743.4 1106.2,744.3 1106.3,750.9 1106.5,743.8 1106.6,749.9 1106.7,748.8 1106.9,753.6 1107.0,750.4 1107.1,741.8 1107.3,742.4 1107.4,747.5 1107.5,750.1 1107.7,743.5 1107.8,745.1 1107.9,746.2 1108.1,742.0 1108.2,753.8 1108.3,748.3 1108.5,753.3 1108.6,751.3 1108.7,751.0 1108.9,755.3 1109.0,752.6 1109.1,755.3 1109.3,753.7 1109.4,742.8 1109.5,743.0 1109.7,743.9 1109.8,745.7 1109.9,743.7 1110.1,744.1 1110.2,743.9 1110.3,746.4 1110.5,766.3 1110.6,746.9 1110.7,753.4 1110.8,751.8 1111.0,748.2 1111.1,745.7 1111.2,746.7 1111.4,751.8 1111.5,749.3 1111.6,748.9 1111.8,745.5 1111.9,748.2 1112.0,745.9 1112.2,749.4 1112.3,746.8 1112.4,755.0 1112.6,755.6 1112.7,742.4 1112.8,747.0 1113.0,739.5 1113.1,746.6 1113.2,744.3 1113.4,747.9 1113.5,747.9 1113.6,749.8 1113.8,751.6 1113.9,752.7 1114.0,751.8 1114.2,741.4 1114.3,746.1 1114.4,745.6 1114.6,747.7 1114.7,745.5 1114.8,752.1 1114.9,743.3 1115.1,756.0 1115.2,748.9 1115.3,755.8 1115.5,745.7 1115.6,741.4 1115.7,744.5 1115.9,751.5 1116.0,751.4 1116.1,745.7 1116.3,738.6 1116.4,748.9 1116.5,745.8 1116.7,747.4 1116.8,749.0 1116.9,747.1 1117.1,750.6 1117.2,748.4 1117.3,741.7 1117.5,748.3 1117.6,752.0 1117.7,746.9 1117.9,755.8 1118.0,745.0 1118.1,747.1 1118.3,744.2 1118.4,743.4 1118.5,748.2 1118.7,745.7 1118.8,753.5 1118.9,757.1 1119.0,748.9 1119.2,738.3 1119.3,748.2 1119.4,748.3 1119.6,739.6 1119.7,744.2 1119.8,745.1 1120.0,750.3 1120.1,738.8 1120.2,744.4 1120.4,757.3 1120.5,745.0 1120.6,750.8 1120.8,742.7 1120.9,744.1 1121.0,745.2 1121.2,752.0 1121.3,752.5 1121.4,745.5 1121.6,759.5 1121.7,743.9 1121.8,746.5 1122.0,748.2 1122.1,747.8 1122.2,748.6 1122.4,747.6 1122.5,746.4 1122.6,739.6 1122.8,746.7 1122.9,750.3 1123.0,745.9 1123.2,744.8 1123.3,750.6 1123.4,744.8 1123.5,750.1 1123.7,748.8 1123.8,743.1 1123.9,742.4 1124.1,745.9 1124.2,741.4 1124.3,744.6 1124.5,752.9 1124.6,752.5 1124.7,744.3 1124.9,749.2 1125.0,745.6 1125.1,748.8 1125.3,745.0 1125.4,748.4 1125.5,746.9 1125.7,749.7 1125.8,759.3 1125.9,754.8 1126.1,740.5 1126.2,742.4 1126.3,745.0 1126.5,749.2 1126.6,739.8 1126.7,745.5 1126.9,749.1 1127.0,750.8 1127.1,730.3 1127.3,745.4 1127.4,747.9 1127.5,750.5 1127.6,745.7 1127.8,707.7 1127.9,745.8 1128.0,737.1 1128.2,751.0 1128.3,752.8 1128.4,747.5 1128.6,752.0 1128.7,741.8 1128.8,753.7 1129.0,745.2 1129.1,745.3 1129.2,748.2 1129.4,750.6 1129.5,749.9 1129.6,745.8 1129.8,740.7 1129.9,751.4 1130.0,748.9 1130.2,749.3 1130.3,746.8 1130.4,751.2 1130.6,743.9 1130.7,755.5 1130.8,743.9 1131.0,741.7 1131.1,743.0 1131.2,747.1 1131.4,737.4 1131.5,751.3 1131.6,755.0 1131.8,753.2 1131.9,748.4 1132.0,747.2 1132.1,753.8 1132.3,751.1 1132.4,744.5 1132.5,753.0 1132.7,754.1 1132.8,750.6 1132.9,749.9 1133.1,755.8 1133.2,735.7 1133.3,751.0 1133.5,740.1 1133.6,762.1 1133.7,740.5 1133.9,746.8 1134.0,738.0 1134.1,747.8 1134.3,749.8 1134.4,748.3 1134.5,750.5 1134.7,751.0 1134.8,750.1 1134.9,744.4 1135.1,750.7 1135.2,743.3 1135.3,747.5 1135.5,744.2 1135.6,742.4 1135.7,750.0 1135.9,752.5 1136.0,750.6 1136.1,751.1 1136.2,748.7 1136.4,750.8 1136.5,740.8 1136.6,740.7 1136.8,755.5 1136.9,746.9 1137.0,746.0 1137.2,758.0 1137.3,751.8 1137.4,743.3 1137.6,748.8 1137.7,731.0 1137.8,750.5 1138.0,749.4 1138.1,754.8 1138.2,744.2 1138.4,737.8 1138.5,746.6 1138.6,741.6 1138.8,752.2 1138.9,742.8 1139.0,746.6 1139.2,743.4 1139.3,754.6 1139.4,750.5 1139.6,750.1 1139.7,750.0 1139.8,747.4 1140.0,746.0 1140.1,740.7 1140.2,754.2 1140.3,742.5 1140.5,750.8 1140.6,748.9 1140.7,739.6 1140.9,744.0 1141.0,757.1 1141.1,750.2 1141.3,745.9 1141.4,750.2 1141.5,744.3 1141.7,742.1 1141.8,745.1 1141.9,741.5 1142.1,758.3 1142.2,754.3 1142.3,737.9 1142.5,751.3 1142.6,747.7 1142.7,750.2 1142.9,744.9 1143.0,753.5 1143.1,749.8 1143.3,752.7 1143.4,747.0 1143.5,743.2 1143.7,742.6 1143.8,756.4 1143.9,746.2 1144.1,748.5 1144.2,748.9 1144.3,743.3 1144.5,745.7 1144.6,752.9 1144.7,746.3 1144.8,747.9 1145.0,745.2 1145.1,752.7 1145.2,747.9 1145.4,747.8 1145.5,737.9 1145.6,745.3 1145.8,747.3 1145.9,750.1 1146.0,742.3 1146.2,750.9 1146.3,756.9 1146.4,745.9 1146.6,757.5 1146.7,740.9 1146.8,743.2 1147.0,750.8 1147.1,755.1 1147.2,738.3 1147.4,746.9 1147.5,749.5 1147.6,741.7 1147.8,753.1 1147.9,740.7 1148.0,751.3 1148.2,749.8 1148.3,738.3 1148.4,748.5 1148.6,740.2 1148.7,751.5 1148.8,744.7 1148.9,750.5 1149.1,752.3 1149.2,745.3 1149.3,747.0 1149.5,754.9 1149.6,756.8 1149.7,744.1 1149.9,746.7 1150.0,740.8 1150.1,747.0 1150.3,745.4 1150.4,747.1 1150.5,740.5 1150.7,752.7 1150.8,747.9 1150.9,748.9 1151.1,741.0 1151.2,751.8 1151.3,738.4 1151.5,754.9 1151.6,752.2 1151.7,744.2 1151.9,749.0 1152.0,744.9 1152.1,751.6 1152.3,747.8 1152.4,743.0 1152.5,748.3 1152.7,744.7 1152.8,740.2 1152.9,754.1 1153.1,752.9 1153.2,745.1 1153.3,741.7 1153.4,739.7 1153.6,748.4 1153.7,761.7 1153.8,747.4 1154.0,748.7 1154.1,752.4 1154.2,746.9 1154.4,748.1 1154.5,736.8 1154.6,745.5 1154.8,747.4 1154.9,746.2 1155.0,745.8 1155.2,745.5 1155.3,745.3 1155.4,746.3 1155.6,747.5 1155.7,746.9 1155.8,750.1 1156.0,748.8 1156.1,752.5 1156.2,745.4 1156.4,749.5 1156.5,752.4 1156.6,740.6 1156.8,747.5 1156.9,757.2 1157.0,750.1 1157.2,751.3 1157.3,758.1 1157.4,740.2 1157.5,754.2 1157.7,746.7 1157.8,747.7 1157.9,753.1 1158.1,757.2 1158.2,736.4 1158.3,748.1 1158.5,748.2 1158.6,745.0 1158.7,747.9 1158.9,747.5 1159.0,742.2 1159.1,751.7 1159.3,758.7 1159.4,749.7 1159.5,747.3 1159.7,754.1 1159.8,741.5 1159.9,753.5 1160.1,744.7 1160.2,749.9 1160.3,744.4 1160.5,750.7 1160.6,748.1 1160.7,756.9 1160.9,736.0 1161.0,746.1 1161.1,745.6 1161.3,745.0 1161.4,744.9 1161.5,742.7 1161.7,753.3 1161.8,743.7 1161.9,736.3 1162.0,757.6 1162.2,737.5 1162.3,746.8 1162.4,746.7 1162.6,747.0 1162.7,746.6 1162.8,736.3 1163.0,744.7 1163.1,743.5 1163.2,744.7 1163.4,748.3 1163.5,744.9 1163.6,744.1 1163.8,742.0 1163.9,748.7 1164.0,748.7 1164.2,737.6 1164.3,747.9 1164.4,741.5 1164.6,747.3 1164.7,752.9 1164.8,740.6 1165.0,748.4 1165.1,744.8 1165.2,741.5 1165.4,743.0 1165.5,743.0 1165.6,748.4 1165.8,748.2 1165.9,751.7 1166.0,748.8 1166.1,743.0 1166.3,743.9 1166.4,747.1 1166.5,752.4 1166.7,747.8 1166.8,750.3 1166.9,753.8 1167.1,751.0 1167.2,749.0 1167.3,751.8 1167.5,747.5 1167.6,749.7 1167.7,747.1 1167.9,744.8 1168.0,752.9 1168.1,751.7 1168.3,751.3 1168.4,749.6 1168.5,748.0 1168.7,748.6 1168.8,746.8 1168.9,750.8 1169.1,741.3 1169.2,747.7 1169.3,746.2 1169.5,748.0 1169.6,751.6 1169.7,749.1 1169.9,742.0 1170.0,753.5 1170.1,735.5 1170.2,739.7 1170.4,743.4 1170.5,741.2 1170.6,750.0 1170.8,756.4 1170.9,746.5 1171.0,745.2 1171.2,746.0 1171.3,745.9 1171.4,745.3 1171.6,751.2 1171.7,752.0 1171.8,746.8 1172.0,746.0 1172.1,740.8 1172.2,753.1 1172.4,743.6 1172.5,752.9 1172.6,741.8 1172.8,759.4 1172.9,748.1 1173.0,748.9 1173.2,750.6 1173.3,738.0 1173.4,742.4 1173.6,755.1 1173.7,749.1 1173.8,748.1 1174.0,744.1 1174.1,755.5 1174.2,741.1 1174.4,747.4 1174.5,739.0 1174.6,743.3 1174.7,752.2 1174.9,749.5 1175.0,744.2 1175.1,747.0 1175.3,744.3 1175.4,748.3 1175.5,749.5 1175.7,748.1 1175.8,750.8 1175.9,752.4 1176.1,751.4 1176.2,745.6 1176.3,749.3 1176.5,738.3 1176.6,743.9 1176.7,744.6 1176.9,747.7 1177.0,747.9 1177.1,739.6 1177.3,753.3 1177.4,741.0 1177.5,750.1 1177.7,741.9 1177.8,745.5 1177.9,747.6 1178.1,750.6 1178.2,742.9 1178.3,752.4 1178.5,748.7 1178.6,749.8 1178.7,743.5 1178.8,742.9 1179.0,750.3 1179.1,743.1 1179.2,741.1 1179.4,745.8 1179.5,743.1 1179.6,745.5 1179.8,752.6 1179.9,742.3 1180.0,748.7 1180.2,747.3 1180.3,741.4 1180.4,746.7 1180.6,748.6 1180.7,751.3 1180.8,751.3 1181.0,742.4 1181.1,746.7 1181.2,751.5 1181.4,748.7 1181.5,746.5 1181.6,743.2 1181.8,749.9 1181.9,755.3 1182.0,739.6 1182.2,747.7 1182.3,743.2 1182.4,757.9 1182.6,717.4 1182.7,753.0 1182.8,768.4" fill="none" stroke="#0000ff" stroke-width="1.7" stroke-linejoin="round"/>
<rect x="911" y="688.9" width="274" height="119.3" fill="none" stroke="#111" stroke-width="1.7"/>
<line x1="904.5" y1="705.8" x2="911" y2="705.8" stroke="#111" stroke-width="1.5"/>
<text x="895" y="709.4" font-size="10.2" text-anchor="end" textLength="17.85" lengthAdjust="spacingAndGlyphs">100</text>
<line x1="904.5" y1="747.5" x2="911" y2="747.5" stroke="#111" stroke-width="1.5"/>
<text x="895" y="751.1" font-size="10.2" text-anchor="end" textLength="5.95" lengthAdjust="spacingAndGlyphs">0</text>
<line x1="904.5" y1="789.6" x2="911" y2="789.6" stroke="#111" stroke-width="1.5"/>
<text x="895" y="793.2" font-size="10.2" text-anchor="end" textLength="26.1" lengthAdjust="spacingAndGlyphs">−100</text>
<line x1="912" y1="808.2" x2="912" y2="814.7" stroke="#111" stroke-width="1.5"/>
<text x="912" y="831.8" font-size="10.2" text-anchor="middle" textLength="5.95" lengthAdjust="spacingAndGlyphs">0</text>
<line x1="977.8" y1="808.2" x2="977.8" y2="814.7" stroke="#111" stroke-width="1.5"/>
<text x="977.8" y="831.8" font-size="10.2" text-anchor="middle" textLength="17.85" lengthAdjust="spacingAndGlyphs">500</text>
<line x1="1044.6" y1="808.2" x2="1044.6" y2="814.7" stroke="#111" stroke-width="1.5"/>
<text x="1044.6" y="831.8" font-size="10.2" text-anchor="middle" textLength="23.8" lengthAdjust="spacingAndGlyphs">1000</text>
<line x1="1111.1" y1="808.2" x2="1111.1" y2="814.7" stroke="#111" stroke-width="1.5"/>
<text x="1111.1" y="831.8" font-size="10.2" text-anchor="middle" textLength="23.8" lengthAdjust="spacingAndGlyphs">1500</text>
<line x1="1176.6" y1="808.2" x2="1176.6" y2="814.7" stroke="#111" stroke-width="1.5"/>
<text x="1176.6" y="831.8" font-size="10.2" text-anchor="middle" textLength="23.8" lengthAdjust="spacingAndGlyphs">2000</text>
<text x="1048.8" y="849.9" font-size="10.2" text-anchor="middle">Y</text>
<text transform="translate(856.5,751) rotate(-90)" font-size="10.2" text-anchor="middle" textLength="34" lengthAdjust="spacingAndGlyphs">counts</text>
<text transform="translate(1194,749.3) rotate(90)" font-size="10.2" text-anchor="middle" textLength="40" lengthAdjust="spacingAndGlyphs">cut in y</text>
<rect x="1109" y="692.2" width="72.4" height="15.8" rx="2" fill="#fff" fill-opacity="0.8" stroke="#d0d0d0" stroke-width="1"/>
<line x1="1111.6" y1="700.1" x2="1133.7" y2="700.1" stroke="#0000ff" stroke-width="1.5"/>
<text x="1137.3" y="703.6" font-size="10.2" text-anchor="start" textLength="39.8" lengthAdjust="spacingAndGlyphs">x=1024</text>
</svg>
<script>
(function(){
var c=document.getElementById('hm'),ctx=c.getContext('2d');
var W=570,H=570,im=ctx.createImageData(W,H),d=im.data;
var s=123456789;
function rnd(){s^=s<<13;s^=s>>>17;s^=s<<5;return ((s>>>0)%1000000)/1000000;}
function g(){var u=rnd()||1e-6,v=rnd();return Math.sqrt(-2*Math.log(u))*Math.cos(6.2831853*v);}
var N=new Float32Array(W*H);
for(var i=0;i<W*H;i++)N[i]=g();
var K=0.05, norm=1/Math.sqrt(1+4*K*K);
var vmin=-11.85,vmax=11.6,SIG=8,M0=-2.5,M1=2.0;
function frame(x,y){
 // rounded rectangle inset
 var L=11,R=W-10,T=10,B=H-13,r=24;
 var cx=Math.min(Math.max(x,L+r),R-r), cy=Math.min(Math.max(y,T+r),B-r);
 var dx=x-cx, dy=y-cy;
 var inside = (x>L+r&&x<R-r)||(y>T+r&&y<B-r);
 var dist;
 if(x>=L+r&&x<=R-r){dist=Math.min(Math.abs(y-T),Math.abs(y-B));}
 else if(y>=T+r&&y<=B-r){dist=Math.min(Math.abs(x-L),Math.abs(x-R));}
 else {dist=Math.abs(Math.sqrt(dx*dx+dy*dy)-r);}
 return dist;
}
for(var y=0;y<H;y++){
 var fy=y/H;
 var rowb=M0+(M1-M0)*Math.pow(fy,1.3);
 var db=H-1-y;
 rowb+=6*Math.exp(-Math.pow((db-10)/12,2));
 rowb-=14*Math.exp(-y/2.5)+5*Math.exp(-y/4);
 for(var x=0;x<W;x++){
  var b=rowb;
  var fd=frame(x,y);
  b+=3.0*Math.exp(-fd*fd/5)*(0.7+0.3*fy);
  if(x<9) b-=2.5*(1-0.5*fy); if(x>W-10&&y<420) b+=1.0;
  if(y>H-40&&(x<12||x>W-11)) b-=1.5;
  var ccx=(x<50)?38:((x>W-50)?W-38:-1);
  if(ccx>=0&&y>H-50){var ddx=x-ccx,ddy=y-(H-38);if(Math.sqrt(ddx*ddx+ddy*ddy)>26&&((x<50&&ddx<0)||(x>W-50&&ddx>0))&&ddy>0) b-=6*0.6;}
  if(x>=480&&x<=493&&y>90&&y<553) b-=3.0*(0.6+0.4*fy);
  var i=y*W+x;
  var n=N[i];
  var nb=(x>0?N[i-1]:0)+(x<W-1?N[i+1]:0)+(y>0?N[i-W]:0)+(y<H-1?N[i+W]:0);
  var v=b+SIG*norm*(n+K*nb)*(rnd()<0.15?2.0:0.8);
  var t=(v-vmin)/(vmax-vmin); if(t<0)t=0; if(t>1)t=1;
  var r=t/0.365079; if(r>1)r=1;
  var gg=(t-0.365079)/0.380953; if(gg<0)gg=0; if(gg>1)gg=1;
  var bb=(t-0.746032)/0.253968; if(bb<0)bb=0;
  var j=i*4;
  d[j]=r*255;d[j+1]=gg*255;d[j+2]=bb*255;d[j+3]=255;
 }
}
ctx.putImageData(im,0,0);
ctx.save();ctx.translate(516-106,484.5-176);ctx.rotate(-0.9);ctx.fillStyle='rgba(255,255,120,0.55)';ctx.beginPath();ctx.ellipse(0.5,0,12.5,5,0,0,6.2832);ctx.fill();ctx.fillStyle='#fff';ctx.beginPath();ctx.ellipse(0,0,11,3.7,0,0,6.2832);ctx.fill();ctx.restore();
})();

</script>
</body></html>
